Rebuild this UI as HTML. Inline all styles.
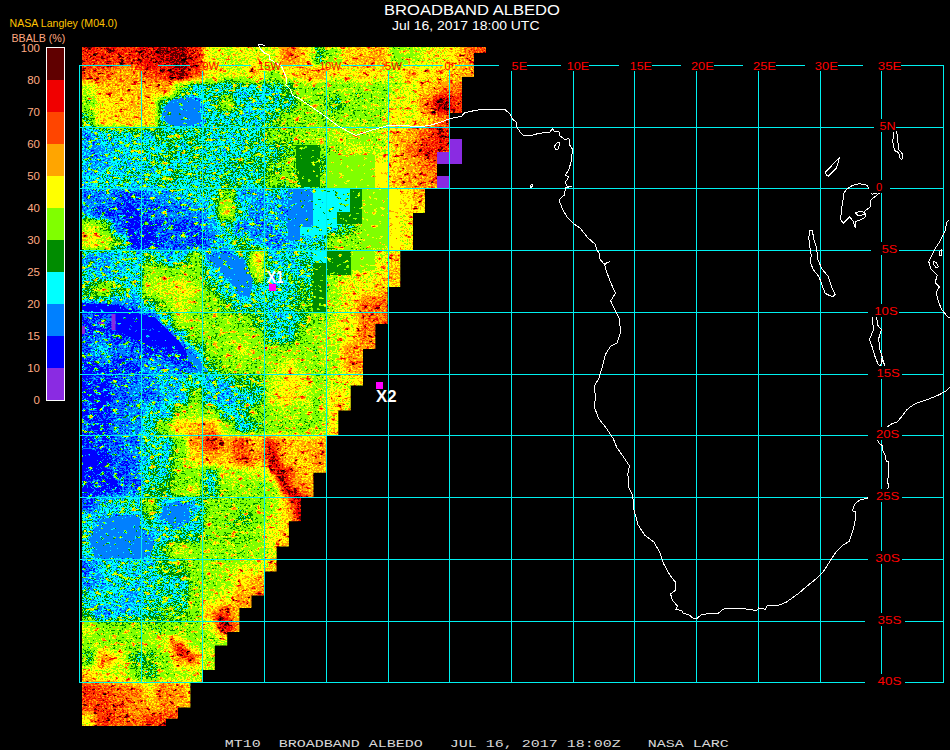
<!DOCTYPE html>
<html><head><meta charset="utf-8"><title>Broadband Albedo</title>
<style>
html,body{margin:0;padding:0;background:#000;width:950px;height:750px;overflow:hidden}
svg{display:block;font-family:"Liberation Sans",sans-serif}
</style></head><body>
<svg width="950" height="750" viewBox="0 0 950 750">
<defs>
<filter id="pal" x="0" y="0" width="950" height="750" filterUnits="userSpaceOnUse" color-interpolation-filters="sRGB">
<feGaussianBlur in="SourceGraphic" stdDeviation="3" result="lvl"/>
<feTurbulence type="fractalNoise" baseFrequency="0.16 0.26" numOctaves="3" seed="7" result="n"/>
<feColorMatrix in="n" type="matrix" values="1 0 0 0 0  1 0 0 0 0  1 0 0 0 0  0 0 0 0 1" result="ng0"/>
<feComponentTransfer in="ng0" result="ng"><feFuncR type="linear" slope="3" intercept="-1.77"/><feFuncG type="linear" slope="3" intercept="-1.77"/><feFuncB type="linear" slope="3" intercept="-1.77"/></feComponentTransfer>
<feTurbulence type="fractalNoise" baseFrequency="0.45 0.6" numOctaves="2" seed="11" result="nf"/>
<feColorMatrix in="nf" type="matrix" values="0 1 0 0 0  0 1 0 0 0  0 1 0 0 0  0 0 0 0 1" result="n2"/>
<feTurbulence type="fractalNoise" baseFrequency="0.09" numOctaves="2" seed="23" result="m"/>
<feColorMatrix in="m" type="matrix" values="0 1 0 0 0  0 1 0 0 0  0 1 0 0 0  0 0 0 0 1" result="mg"/>
<feComposite in="lvl" in2="mg" operator="arithmetic" k1="0" k2="1" k3="0.07" k4="-0.035" result="lvl2"/>
<feComposite in="lvl2" in2="n2" operator="arithmetic" k1="0.5" k2="0.75" k3="0.1" k4="-0.05" result="lvl3"/>
<feComposite in="lvl3" in2="ng" operator="arithmetic" k1="0.15" k2="1" k3="0.40" k4="0" result="sum"/>
<feComponentTransfer in="sum">
<feFuncR type="discrete" tableValues="0.000 0.000 0.000 0.000 0.000 0.000 0.502 0.502 1.000 1.000 1.000 1.000 1.000 1.000 0.941 0.941 0.376 0.376 0.376 0.376 0.000 0.000"/>
<feFuncG type="discrete" tableValues="0.000 0.000 0.000 0.502 1.000 0.549 1.000 1.000 1.000 1.000 0.647 0.647 0.271 0.271 0.000 0.000 0.000 0.000 0.000 0.000 0.000 0.000"/>
<feFuncB type="discrete" tableValues="1.000 1.000 1.000 1.000 1.000 0.000 0.000 0.000 0.000 0.000 0.000 0.000 0.000 0.000 0.000 0.000 0.000 0.000 0.000 0.000 0.000 0.000"/>
</feComponentTransfer>
</filter>
<filter id="pal2" x="0" y="0" width="950" height="750" filterUnits="userSpaceOnUse" color-interpolation-filters="sRGB">
<feTurbulence type="fractalNoise" baseFrequency="0.45 0.6" numOctaves="2" seed="5" result="nf"/>
<feColorMatrix in="nf" type="matrix" values="0 1 0 0 0  0 1 0 0 0  0 1 0 0 0  0 0 0 0 1" result="n2"/>
<feTurbulence type="fractalNoise" baseFrequency="0.18 0.28" numOctaves="3" seed="31" result="n"/>
<feColorMatrix in="n" type="matrix" values="1 0 0 0 0  1 0 0 0 0  1 0 0 0 0  0 0 0 0 1" result="ng0"/>
<feComponentTransfer in="ng0" result="ng"><feFuncR type="linear" slope="3" intercept="-1.92"/><feFuncG type="linear" slope="3" intercept="-1.92"/><feFuncB type="linear" slope="3" intercept="-1.92"/></feComponentTransfer>
<feComposite in="SourceGraphic" in2="n2" operator="arithmetic" k1="0" k2="1" k3="0.06" k4="-0.03" result="l3"/>
<feComposite in="l3" in2="ng" operator="arithmetic" k1="0" k2="1" k3="0.4" k4="0" result="sum"/>
<feComponentTransfer in="sum" result="col">
<feFuncR type="discrete" tableValues="0.000 0.000 0.000 0.000 0.000 0.000 0.502 0.502 1.000 1.000 1.000 1.000 1.000 1.000 0.941 0.941 0.376 0.376 0.376 0.376 0.000 0.000"/>
<feFuncG type="discrete" tableValues="0.000 0.000 0.000 0.502 1.000 0.549 1.000 1.000 1.000 1.000 0.647 0.647 0.271 0.271 0.000 0.000 0.000 0.000 0.000 0.000 0.000 0.000"/>
<feFuncB type="discrete" tableValues="1.000 1.000 1.000 1.000 1.000 0.000 0.000 0.000 0.000 0.000 0.000 0.000 0.000 0.000 0.000 0.000 0.000 0.000 0.000 0.000 0.000 0.000"/>
</feComponentTransfer>
<feComposite in="col" in2="SourceGraphic" operator="in"/>
</filter>
<clipPath id="dataclip"><polygon points="82,47 486,47 486,53 474,53 474,77 462,77 462,113 450,113 450,152 437,152 437,188 425,188 425,213 413,213 413,250 400.3,250 400.3,287 387.6,287 387.6,324 375.4,324 375.4,349 363,349 363,385.4 350.7,385.4 350.7,410.5 338.3,410.5 338.3,435 326,435 326,472.8 313.5,472.8 313.5,498 301,498 301,521.3 288.9,521.3 288.9,546.4 276.6,546.4 276.6,571.4 264,571.4 264,595.4 251.5,595.4 251.5,608 239.4,608 239.4,632 227.2,632 227.2,645.4 214.8,645.4 214.8,670 202.7,670 202.7,682.2 190.4,682.2 190.4,707.4 178,707.4 178,718.8 166,718.8 166,726 82,726"/></clipPath>
</defs>
<rect width="950" height="750" fill="#000"/>
<g clip-path="url(#dataclip)">
<g filter="url(#pal)">
<rect x="0" y="0" width="950" height="750" fill="#6a6a6a"/>
<rect x="49.6" y="3.9" width="15.9" height="15.9" fill="#a2a2a2"/>
<rect x="65.0" y="3.9" width="15.9" height="15.9" fill="#a2a2a2"/>
<rect x="80.4" y="3.9" width="15.9" height="15.9" fill="#a2a2a2"/>
<rect x="95.8" y="3.9" width="15.9" height="15.9" fill="#a2a2a2"/>
<rect x="111.2" y="3.9" width="15.9" height="15.9" fill="#a4a4a4"/>
<rect x="126.6" y="3.9" width="15.9" height="15.9" fill="#a7a7a7"/>
<rect x="142.0" y="3.9" width="15.9" height="15.9" fill="#adadad"/>
<rect x="157.4" y="3.9" width="15.9" height="15.9" fill="#b1b1b1"/>
<rect x="172.8" y="3.9" width="15.9" height="15.9" fill="#a8a8a8"/>
<rect x="188.2" y="3.9" width="15.9" height="15.9" fill="#939393"/>
<rect x="203.6" y="3.9" width="15.9" height="15.9" fill="#787878"/>
<rect x="219.0" y="3.9" width="15.9" height="15.9" fill="#676767"/>
<rect x="234.4" y="3.9" width="15.9" height="15.9" fill="#5f5f5f"/>
<rect x="249.8" y="3.9" width="15.9" height="15.9" fill="#646464"/>
<rect x="265.2" y="3.9" width="15.9" height="15.9" fill="#6b6b6b"/>
<rect x="280.6" y="3.9" width="15.9" height="15.9" fill="#6e6e6e"/>
<rect x="296.0" y="3.9" width="15.9" height="15.9" fill="#666666"/>
<rect x="311.4" y="3.9" width="15.9" height="15.9" fill="#5b5b5b"/>
<rect x="326.8" y="3.9" width="15.9" height="15.9" fill="#5b5b5b"/>
<rect x="342.2" y="3.9" width="15.9" height="15.9" fill="#676767"/>
<rect x="357.6" y="3.9" width="15.9" height="15.9" fill="#6e6e6e"/>
<rect x="373.0" y="3.9" width="15.9" height="15.9" fill="#6c6c6c"/>
<rect x="388.4" y="3.9" width="15.9" height="15.9" fill="#616161"/>
<rect x="403.8" y="3.9" width="15.9" height="15.9" fill="#5d5d5d"/>
<rect x="419.2" y="3.9" width="15.9" height="15.9" fill="#5f5f5f"/>
<rect x="434.6" y="3.9" width="15.9" height="15.9" fill="#6b6b6b"/>
<rect x="450.0" y="3.9" width="15.9" height="15.9" fill="#797979"/>
<rect x="465.4" y="3.9" width="15.9" height="15.9" fill="#898989"/>
<rect x="480.8" y="3.9" width="15.9" height="15.9" fill="#929292"/>
<rect x="496.2" y="3.9" width="15.9" height="15.9" fill="#979797"/>
<rect x="511.6" y="3.9" width="15.9" height="15.9" fill="#979797"/>
<rect x="49.6" y="19.3" width="15.9" height="15.9" fill="#a2a2a2"/>
<rect x="65.0" y="19.3" width="15.9" height="15.9" fill="#a2a2a2"/>
<rect x="80.4" y="19.3" width="15.9" height="15.9" fill="#a2a2a2"/>
<rect x="95.8" y="19.3" width="15.9" height="15.9" fill="#a2a2a2"/>
<rect x="111.2" y="19.3" width="15.9" height="15.9" fill="#a2a2a2"/>
<rect x="126.6" y="19.3" width="15.9" height="15.9" fill="#a6a6a6"/>
<rect x="142.0" y="19.3" width="15.9" height="15.9" fill="#acacac"/>
<rect x="157.4" y="19.3" width="15.9" height="15.9" fill="#b7b7b7"/>
<rect x="172.8" y="19.3" width="15.9" height="15.9" fill="#b1b1b1"/>
<rect x="188.2" y="19.3" width="15.9" height="15.9" fill="#949494"/>
<rect x="203.6" y="19.3" width="15.9" height="15.9" fill="#757575"/>
<rect x="219.0" y="19.3" width="15.9" height="15.9" fill="#5f5f5f"/>
<rect x="234.4" y="19.3" width="15.9" height="15.9" fill="#5f5f5f"/>
<rect x="249.8" y="19.3" width="15.9" height="15.9" fill="#5f5f5f"/>
<rect x="265.2" y="19.3" width="15.9" height="15.9" fill="#6e6e6e"/>
<rect x="280.6" y="19.3" width="15.9" height="15.9" fill="#757575"/>
<rect x="296.0" y="19.3" width="15.9" height="15.9" fill="#686868"/>
<rect x="311.4" y="19.3" width="15.9" height="15.9" fill="#555555"/>
<rect x="326.8" y="19.3" width="15.9" height="15.9" fill="#555555"/>
<rect x="342.2" y="19.3" width="15.9" height="15.9" fill="#686868"/>
<rect x="357.6" y="19.3" width="15.9" height="15.9" fill="#787878"/>
<rect x="373.0" y="19.3" width="15.9" height="15.9" fill="#6b6b6b"/>
<rect x="388.4" y="19.3" width="15.9" height="15.9" fill="#616161"/>
<rect x="403.8" y="19.3" width="15.9" height="15.9" fill="#575757"/>
<rect x="419.2" y="19.3" width="15.9" height="15.9" fill="#606060"/>
<rect x="434.6" y="19.3" width="15.9" height="15.9" fill="#686868"/>
<rect x="450.0" y="19.3" width="15.9" height="15.9" fill="#7a7a7a"/>
<rect x="465.4" y="19.3" width="15.9" height="15.9" fill="#8a8a8a"/>
<rect x="480.8" y="19.3" width="15.9" height="15.9" fill="#979797"/>
<rect x="496.2" y="19.3" width="15.9" height="15.9" fill="#979797"/>
<rect x="511.6" y="19.3" width="15.9" height="15.9" fill="#949494"/>
<rect x="49.6" y="34.7" width="15.9" height="15.9" fill="#a1a1a1"/>
<rect x="65.0" y="34.7" width="15.9" height="15.9" fill="#a2a2a2"/>
<rect x="80.4" y="34.7" width="15.9" height="15.9" fill="#a2a2a2"/>
<rect x="95.8" y="34.7" width="15.9" height="15.9" fill="#a2a2a2"/>
<rect x="111.2" y="34.7" width="15.9" height="15.9" fill="#a2a2a2"/>
<rect x="126.6" y="34.7" width="15.9" height="15.9" fill="#a2a2a2"/>
<rect x="142.0" y="34.7" width="15.9" height="15.9" fill="#aeaeae"/>
<rect x="157.4" y="34.7" width="15.9" height="15.9" fill="#b8b8b8"/>
<rect x="172.8" y="34.7" width="15.9" height="15.9" fill="#bfbfbf"/>
<rect x="188.2" y="34.7" width="15.9" height="15.9" fill="#a2a2a2"/>
<rect x="203.6" y="34.7" width="15.9" height="15.9" fill="#5f5f5f"/>
<rect x="219.0" y="34.7" width="15.9" height="15.9" fill="#5f5f5f"/>
<rect x="234.4" y="34.7" width="15.9" height="15.9" fill="#5f5f5f"/>
<rect x="249.8" y="34.7" width="15.9" height="15.9" fill="#5f5f5f"/>
<rect x="265.2" y="34.7" width="15.9" height="15.9" fill="#5f5f5f"/>
<rect x="280.6" y="34.7" width="15.9" height="15.9" fill="#8b8b8b"/>
<rect x="296.0" y="34.7" width="15.9" height="15.9" fill="#747474"/>
<rect x="311.4" y="34.7" width="15.9" height="15.9" fill="#404040"/>
<rect x="326.8" y="34.7" width="15.9" height="15.9" fill="#515151"/>
<rect x="342.2" y="34.7" width="15.9" height="15.9" fill="#747474"/>
<rect x="357.6" y="34.7" width="15.9" height="15.9" fill="#747474"/>
<rect x="373.0" y="34.7" width="15.9" height="15.9" fill="#808080"/>
<rect x="388.4" y="34.7" width="15.9" height="15.9" fill="#4e4e4e"/>
<rect x="403.8" y="34.7" width="15.9" height="15.9" fill="#585858"/>
<rect x="419.2" y="34.7" width="15.9" height="15.9" fill="#5f5f5f"/>
<rect x="434.6" y="34.7" width="15.9" height="15.9" fill="#686868"/>
<rect x="450.0" y="34.7" width="15.9" height="15.9" fill="#6f6f6f"/>
<rect x="465.4" y="34.7" width="15.9" height="15.9" fill="#979797"/>
<rect x="480.8" y="34.7" width="15.9" height="15.9" fill="#979797"/>
<rect x="496.2" y="34.7" width="15.9" height="15.9" fill="#919191"/>
<rect x="511.6" y="34.7" width="15.9" height="15.9" fill="#939393"/>
<rect x="49.6" y="50.1" width="15.9" height="15.9" fill="#989898"/>
<rect x="65.0" y="50.1" width="15.9" height="15.9" fill="#9e9e9e"/>
<rect x="80.4" y="50.1" width="15.9" height="15.9" fill="#a2a2a2"/>
<rect x="95.8" y="50.1" width="15.9" height="15.9" fill="#a2a2a2"/>
<rect x="111.2" y="50.1" width="15.9" height="15.9" fill="#a2a2a2"/>
<rect x="126.6" y="50.1" width="15.9" height="15.9" fill="#a2a2a2"/>
<rect x="142.0" y="50.1" width="15.9" height="15.9" fill="#aeaeae"/>
<rect x="157.4" y="50.1" width="15.9" height="15.9" fill="#b8b8b8"/>
<rect x="172.8" y="50.1" width="15.9" height="15.9" fill="#bfbfbf"/>
<rect x="188.2" y="50.1" width="15.9" height="15.9" fill="#a2a2a2"/>
<rect x="203.6" y="50.1" width="15.9" height="15.9" fill="#5f5f5f"/>
<rect x="219.0" y="50.1" width="15.9" height="15.9" fill="#5f5f5f"/>
<rect x="234.4" y="50.1" width="15.9" height="15.9" fill="#5f5f5f"/>
<rect x="249.8" y="50.1" width="15.9" height="15.9" fill="#5f5f5f"/>
<rect x="265.2" y="50.1" width="15.9" height="15.9" fill="#5f5f5f"/>
<rect x="280.6" y="50.1" width="15.9" height="15.9" fill="#8b8b8b"/>
<rect x="296.0" y="50.1" width="15.9" height="15.9" fill="#747474"/>
<rect x="311.4" y="50.1" width="15.9" height="15.9" fill="#404040"/>
<rect x="326.8" y="50.1" width="15.9" height="15.9" fill="#515151"/>
<rect x="342.2" y="50.1" width="15.9" height="15.9" fill="#747474"/>
<rect x="357.6" y="50.1" width="15.9" height="15.9" fill="#747474"/>
<rect x="373.0" y="50.1" width="15.9" height="15.9" fill="#808080"/>
<rect x="388.4" y="50.1" width="15.9" height="15.9" fill="#4e4e4e"/>
<rect x="403.8" y="50.1" width="15.9" height="15.9" fill="#585858"/>
<rect x="419.2" y="50.1" width="15.9" height="15.9" fill="#5f5f5f"/>
<rect x="434.6" y="50.1" width="15.9" height="15.9" fill="#686868"/>
<rect x="450.0" y="50.1" width="15.9" height="15.9" fill="#6f6f6f"/>
<rect x="465.4" y="50.1" width="15.9" height="15.9" fill="#8b8b8b"/>
<rect x="480.8" y="50.1" width="15.9" height="15.9" fill="#8b8b8b"/>
<rect x="496.2" y="50.1" width="15.9" height="15.9" fill="#919191"/>
<rect x="511.6" y="50.1" width="15.9" height="15.9" fill="#8f8f8f"/>
<rect x="49.6" y="65.5" width="15.9" height="15.9" fill="#858585"/>
<rect x="65.0" y="65.5" width="15.9" height="15.9" fill="#878787"/>
<rect x="80.4" y="65.5" width="15.9" height="15.9" fill="#979797"/>
<rect x="95.8" y="65.5" width="15.9" height="15.9" fill="#8b8b8b"/>
<rect x="111.2" y="65.5" width="15.9" height="15.9" fill="#808080"/>
<rect x="126.6" y="65.5" width="15.9" height="15.9" fill="#808080"/>
<rect x="142.0" y="65.5" width="15.9" height="15.9" fill="#979797"/>
<rect x="157.4" y="65.5" width="15.9" height="15.9" fill="#a2a2a2"/>
<rect x="172.8" y="65.5" width="15.9" height="15.9" fill="#bfbfbf"/>
<rect x="188.2" y="65.5" width="15.9" height="15.9" fill="#979797"/>
<rect x="203.6" y="65.5" width="15.9" height="15.9" fill="#686868"/>
<rect x="219.0" y="65.5" width="15.9" height="15.9" fill="#5d5d5d"/>
<rect x="234.4" y="65.5" width="15.9" height="15.9" fill="#5d5d5d"/>
<rect x="249.8" y="65.5" width="15.9" height="15.9" fill="#747474"/>
<rect x="265.2" y="65.5" width="15.9" height="15.9" fill="#4e4e4e"/>
<rect x="280.6" y="65.5" width="15.9" height="15.9" fill="#686868"/>
<rect x="296.0" y="65.5" width="15.9" height="15.9" fill="#747474"/>
<rect x="311.4" y="65.5" width="15.9" height="15.9" fill="#808080"/>
<rect x="326.8" y="65.5" width="15.9" height="15.9" fill="#686868"/>
<rect x="342.2" y="65.5" width="15.9" height="15.9" fill="#686868"/>
<rect x="357.6" y="65.5" width="15.9" height="15.9" fill="#747474"/>
<rect x="373.0" y="65.5" width="15.9" height="15.9" fill="#686868"/>
<rect x="388.4" y="65.5" width="15.9" height="15.9" fill="#5d5d5d"/>
<rect x="403.8" y="65.5" width="15.9" height="15.9" fill="#747474"/>
<rect x="419.2" y="65.5" width="15.9" height="15.9" fill="#646464"/>
<rect x="434.6" y="65.5" width="15.9" height="15.9" fill="#6f6f6f"/>
<rect x="450.0" y="65.5" width="15.9" height="15.9" fill="#747474"/>
<rect x="465.4" y="65.5" width="15.9" height="15.9" fill="#808080"/>
<rect x="480.8" y="65.5" width="15.9" height="15.9" fill="#888888"/>
<rect x="496.2" y="65.5" width="15.9" height="15.9" fill="#8b8b8b"/>
<rect x="511.6" y="65.5" width="15.9" height="15.9" fill="#8e8e8e"/>
<rect x="49.6" y="80.9" width="15.9" height="15.9" fill="#6a6a6a"/>
<rect x="65.0" y="80.9" width="15.9" height="15.9" fill="#6b6b6b"/>
<rect x="80.4" y="80.9" width="15.9" height="15.9" fill="#5d5d5d"/>
<rect x="95.8" y="80.9" width="15.9" height="15.9" fill="#767676"/>
<rect x="111.2" y="80.9" width="15.9" height="15.9" fill="#767676"/>
<rect x="126.6" y="80.9" width="15.9" height="15.9" fill="#767676"/>
<rect x="142.0" y="80.9" width="15.9" height="15.9" fill="#767676"/>
<rect x="157.4" y="80.9" width="15.9" height="15.9" fill="#808080"/>
<rect x="172.8" y="80.9" width="15.9" height="15.9" fill="#4a4a4a"/>
<rect x="188.2" y="80.9" width="15.9" height="15.9" fill="#323232"/>
<rect x="203.6" y="80.9" width="15.9" height="15.9" fill="#383838"/>
<rect x="219.0" y="80.9" width="15.9" height="15.9" fill="#363636"/>
<rect x="234.4" y="80.9" width="15.9" height="15.9" fill="#363636"/>
<rect x="249.8" y="80.9" width="15.9" height="15.9" fill="#363636"/>
<rect x="265.2" y="80.9" width="15.9" height="15.9" fill="#343434"/>
<rect x="280.6" y="80.9" width="15.9" height="15.9" fill="#404040"/>
<rect x="296.0" y="80.9" width="15.9" height="15.9" fill="#515151"/>
<rect x="311.4" y="80.9" width="15.9" height="15.9" fill="#4f4f4f"/>
<rect x="326.8" y="80.9" width="15.9" height="15.9" fill="#4e4e4e"/>
<rect x="342.2" y="80.9" width="15.9" height="15.9" fill="#515151"/>
<rect x="357.6" y="80.9" width="15.9" height="15.9" fill="#515151"/>
<rect x="373.0" y="80.9" width="15.9" height="15.9" fill="#515151"/>
<rect x="388.4" y="80.9" width="15.9" height="15.9" fill="#585858"/>
<rect x="403.8" y="80.9" width="15.9" height="15.9" fill="#616161"/>
<rect x="419.2" y="80.9" width="15.9" height="15.9" fill="#747474"/>
<rect x="434.6" y="80.9" width="15.9" height="15.9" fill="#808080"/>
<rect x="450.0" y="80.9" width="15.9" height="15.9" fill="#8b8b8b"/>
<rect x="465.4" y="80.9" width="15.9" height="15.9" fill="#8b8b8b"/>
<rect x="480.8" y="80.9" width="15.9" height="15.9" fill="#8f8f8f"/>
<rect x="496.2" y="80.9" width="15.9" height="15.9" fill="#8e8e8e"/>
<rect x="511.6" y="80.9" width="15.9" height="15.9" fill="#8b8b8b"/>
<rect x="49.6" y="96.3" width="15.9" height="15.9" fill="#4f4f4f"/>
<rect x="65.0" y="96.3" width="15.9" height="15.9" fill="#4d4d4d"/>
<rect x="80.4" y="96.3" width="15.9" height="15.9" fill="#4e4e4e"/>
<rect x="95.8" y="96.3" width="15.9" height="15.9" fill="#6f6f6f"/>
<rect x="111.2" y="96.3" width="15.9" height="15.9" fill="#6f6f6f"/>
<rect x="126.6" y="96.3" width="15.9" height="15.9" fill="#747474"/>
<rect x="142.0" y="96.3" width="15.9" height="15.9" fill="#6f6f6f"/>
<rect x="157.4" y="96.3" width="15.9" height="15.9" fill="#383838"/>
<rect x="172.8" y="96.3" width="15.9" height="15.9" fill="#2a2a2a"/>
<rect x="188.2" y="96.3" width="15.9" height="15.9" fill="#2a2a2a"/>
<rect x="203.6" y="96.3" width="15.9" height="15.9" fill="#363636"/>
<rect x="219.0" y="96.3" width="15.9" height="15.9" fill="#4e4e4e"/>
<rect x="234.4" y="96.3" width="15.9" height="15.9" fill="#343434"/>
<rect x="249.8" y="96.3" width="15.9" height="15.9" fill="#343434"/>
<rect x="265.2" y="96.3" width="15.9" height="15.9" fill="#353535"/>
<rect x="280.6" y="96.3" width="15.9" height="15.9" fill="#383838"/>
<rect x="296.0" y="96.3" width="15.9" height="15.9" fill="#4e4e4e"/>
<rect x="311.4" y="96.3" width="15.9" height="15.9" fill="#4e4e4e"/>
<rect x="326.8" y="96.3" width="15.9" height="15.9" fill="#414141"/>
<rect x="342.2" y="96.3" width="15.9" height="15.9" fill="#4e4e4e"/>
<rect x="357.6" y="96.3" width="15.9" height="15.9" fill="#505050"/>
<rect x="373.0" y="96.3" width="15.9" height="15.9" fill="#515151"/>
<rect x="388.4" y="96.3" width="15.9" height="15.9" fill="#646464"/>
<rect x="403.8" y="96.3" width="15.9" height="15.9" fill="#646464"/>
<rect x="419.2" y="96.3" width="15.9" height="15.9" fill="#8b8b8b"/>
<rect x="434.6" y="96.3" width="15.9" height="15.9" fill="#bfbfbf"/>
<rect x="450.0" y="96.3" width="15.9" height="15.9" fill="#a2a2a2"/>
<rect x="465.4" y="96.3" width="15.9" height="15.9" fill="#a2a2a2"/>
<rect x="480.8" y="96.3" width="15.9" height="15.9" fill="#979797"/>
<rect x="496.2" y="96.3" width="15.9" height="15.9" fill="#989898"/>
<rect x="49.6" y="111.7" width="15.9" height="15.9" fill="#3d3d3d"/>
<rect x="65.0" y="111.7" width="15.9" height="15.9" fill="#3c3c3c"/>
<rect x="80.4" y="111.7" width="15.9" height="15.9" fill="#404040"/>
<rect x="95.8" y="111.7" width="15.9" height="15.9" fill="#6f6f6f"/>
<rect x="111.2" y="111.7" width="15.9" height="15.9" fill="#6f6f6f"/>
<rect x="126.6" y="111.7" width="15.9" height="15.9" fill="#747474"/>
<rect x="142.0" y="111.7" width="15.9" height="15.9" fill="#6f6f6f"/>
<rect x="157.4" y="111.7" width="15.9" height="15.9" fill="#323232"/>
<rect x="172.8" y="111.7" width="15.9" height="15.9" fill="#2a2a2a"/>
<rect x="188.2" y="111.7" width="15.9" height="15.9" fill="#2a2a2a"/>
<rect x="203.6" y="111.7" width="15.9" height="15.9" fill="#363636"/>
<rect x="219.0" y="111.7" width="15.9" height="15.9" fill="#383838"/>
<rect x="234.4" y="111.7" width="15.9" height="15.9" fill="#343434"/>
<rect x="249.8" y="111.7" width="15.9" height="15.9" fill="#343434"/>
<rect x="265.2" y="111.7" width="15.9" height="15.9" fill="#404040"/>
<rect x="280.6" y="111.7" width="15.9" height="15.9" fill="#4c4c4c"/>
<rect x="296.0" y="111.7" width="15.9" height="15.9" fill="#4e4e4e"/>
<rect x="311.4" y="111.7" width="15.9" height="15.9" fill="#4d4d4d"/>
<rect x="326.8" y="111.7" width="15.9" height="15.9" fill="#4e4e4e"/>
<rect x="342.2" y="111.7" width="15.9" height="15.9" fill="#4e4e4e"/>
<rect x="357.6" y="111.7" width="15.9" height="15.9" fill="#515151"/>
<rect x="373.0" y="111.7" width="15.9" height="15.9" fill="#515151"/>
<rect x="388.4" y="111.7" width="15.9" height="15.9" fill="#646464"/>
<rect x="403.8" y="111.7" width="15.9" height="15.9" fill="#646464"/>
<rect x="419.2" y="111.7" width="15.9" height="15.9" fill="#747474"/>
<rect x="434.6" y="111.7" width="15.9" height="15.9" fill="#8b8b8b"/>
<rect x="450.0" y="111.7" width="15.9" height="15.9" fill="#979797"/>
<rect x="465.4" y="111.7" width="15.9" height="15.9" fill="#979797"/>
<rect x="480.8" y="111.7" width="15.9" height="15.9" fill="#a2a2a2"/>
<rect x="496.2" y="111.7" width="15.9" height="15.9" fill="#9e9e9e"/>
<rect x="49.6" y="127.2" width="15.9" height="15.9" fill="#343434"/>
<rect x="65.0" y="127.2" width="15.9" height="15.9" fill="#323232"/>
<rect x="80.4" y="127.2" width="15.9" height="15.9" fill="#2c2c2c"/>
<rect x="95.8" y="127.2" width="15.9" height="15.9" fill="#313131"/>
<rect x="111.2" y="127.2" width="15.9" height="15.9" fill="#343434"/>
<rect x="126.6" y="127.2" width="15.9" height="15.9" fill="#363636"/>
<rect x="142.0" y="127.2" width="15.9" height="15.9" fill="#363636"/>
<rect x="157.4" y="127.2" width="15.9" height="15.9" fill="#3a3a3a"/>
<rect x="172.8" y="127.2" width="15.9" height="15.9" fill="#3a3a3a"/>
<rect x="188.2" y="127.2" width="15.9" height="15.9" fill="#3a3a3a"/>
<rect x="203.6" y="127.2" width="15.9" height="15.9" fill="#353535"/>
<rect x="219.0" y="127.2" width="15.9" height="15.9" fill="#353535"/>
<rect x="234.4" y="127.2" width="15.9" height="15.9" fill="#363636"/>
<rect x="249.8" y="127.2" width="15.9" height="15.9" fill="#373737"/>
<rect x="265.2" y="127.2" width="15.9" height="15.9" fill="#4c4c4c"/>
<rect x="280.6" y="127.2" width="15.9" height="15.9" fill="#4c4c4c"/>
<rect x="296.0" y="127.2" width="15.9" height="15.9" fill="#505050"/>
<rect x="311.4" y="127.2" width="15.9" height="15.9" fill="#515151"/>
<rect x="326.8" y="127.2" width="15.9" height="15.9" fill="#585858"/>
<rect x="342.2" y="127.2" width="15.9" height="15.9" fill="#585858"/>
<rect x="357.6" y="127.2" width="15.9" height="15.9" fill="#535353"/>
<rect x="373.0" y="127.2" width="15.9" height="15.9" fill="#5a5a5a"/>
<rect x="388.4" y="127.2" width="15.9" height="15.9" fill="#747474"/>
<rect x="403.8" y="127.2" width="15.9" height="15.9" fill="#7b7b7b"/>
<rect x="419.2" y="127.2" width="15.9" height="15.9" fill="#979797"/>
<rect x="434.6" y="127.2" width="15.9" height="15.9" fill="#aeaeae"/>
<rect x="450.0" y="127.2" width="15.9" height="15.9" fill="#aeaeae"/>
<rect x="465.4" y="127.2" width="15.9" height="15.9" fill="#aeaeae"/>
<rect x="480.8" y="127.2" width="15.9" height="15.9" fill="#a2a2a2"/>
<rect x="496.2" y="127.2" width="15.9" height="15.9" fill="#a1a1a1"/>
<rect x="49.6" y="142.6" width="15.9" height="15.9" fill="#2f2f2f"/>
<rect x="65.0" y="142.6" width="15.9" height="15.9" fill="#2c2c2c"/>
<rect x="80.4" y="142.6" width="15.9" height="15.9" fill="#2b2b2b"/>
<rect x="95.8" y="142.6" width="15.9" height="15.9" fill="#2d2d2d"/>
<rect x="111.2" y="142.6" width="15.9" height="15.9" fill="#313131"/>
<rect x="126.6" y="142.6" width="15.9" height="15.9" fill="#343434"/>
<rect x="142.0" y="142.6" width="15.9" height="15.9" fill="#373737"/>
<rect x="157.4" y="142.6" width="15.9" height="15.9" fill="#3a3a3a"/>
<rect x="172.8" y="142.6" width="15.9" height="15.9" fill="#3a3a3a"/>
<rect x="188.2" y="142.6" width="15.9" height="15.9" fill="#3a3a3a"/>
<rect x="203.6" y="142.6" width="15.9" height="15.9" fill="#363636"/>
<rect x="219.0" y="142.6" width="15.9" height="15.9" fill="#363636"/>
<rect x="234.4" y="142.6" width="15.9" height="15.9" fill="#373737"/>
<rect x="249.8" y="142.6" width="15.9" height="15.9" fill="#3a3a3a"/>
<rect x="265.2" y="142.6" width="15.9" height="15.9" fill="#383838"/>
<rect x="280.6" y="142.6" width="15.9" height="15.9" fill="#404040"/>
<rect x="296.0" y="142.6" width="15.9" height="15.9" fill="#4e4e4e"/>
<rect x="311.4" y="142.6" width="15.9" height="15.9" fill="#4e4e4e"/>
<rect x="326.8" y="142.6" width="15.9" height="15.9" fill="#515151"/>
<rect x="342.2" y="142.6" width="15.9" height="15.9" fill="#5d5d5d"/>
<rect x="357.6" y="142.6" width="15.9" height="15.9" fill="#5a5a5a"/>
<rect x="373.0" y="142.6" width="15.9" height="15.9" fill="#5a5a5a"/>
<rect x="388.4" y="142.6" width="15.9" height="15.9" fill="#6f6f6f"/>
<rect x="403.8" y="142.6" width="15.9" height="15.9" fill="#8b8b8b"/>
<rect x="419.2" y="142.6" width="15.9" height="15.9" fill="#9e9e9e"/>
<rect x="434.6" y="142.6" width="15.9" height="15.9" fill="#a2a2a2"/>
<rect x="450.0" y="142.6" width="15.9" height="15.9" fill="#a2a2a2"/>
<rect x="465.4" y="142.6" width="15.9" height="15.9" fill="#a2a2a2"/>
<rect x="480.8" y="142.6" width="15.9" height="15.9" fill="#9e9e9e"/>
<rect x="496.2" y="142.6" width="15.9" height="15.9" fill="#9b9b9b"/>
<rect x="49.6" y="158.0" width="15.9" height="15.9" fill="#2d2d2d"/>
<rect x="65.0" y="158.0" width="15.9" height="15.9" fill="#2e2e2e"/>
<rect x="80.4" y="158.0" width="15.9" height="15.9" fill="#2e2e2e"/>
<rect x="95.8" y="158.0" width="15.9" height="15.9" fill="#2d2d2d"/>
<rect x="111.2" y="158.0" width="15.9" height="15.9" fill="#303030"/>
<rect x="126.6" y="158.0" width="15.9" height="15.9" fill="#323232"/>
<rect x="142.0" y="158.0" width="15.9" height="15.9" fill="#353535"/>
<rect x="157.4" y="158.0" width="15.9" height="15.9" fill="#363636"/>
<rect x="172.8" y="158.0" width="15.9" height="15.9" fill="#353535"/>
<rect x="188.2" y="158.0" width="15.9" height="15.9" fill="#353535"/>
<rect x="203.6" y="158.0" width="15.9" height="15.9" fill="#363636"/>
<rect x="219.0" y="158.0" width="15.9" height="15.9" fill="#373737"/>
<rect x="234.4" y="158.0" width="15.9" height="15.9" fill="#3a3a3a"/>
<rect x="249.8" y="158.0" width="15.9" height="15.9" fill="#3a3a3a"/>
<rect x="265.2" y="158.0" width="15.9" height="15.9" fill="#404040"/>
<rect x="280.6" y="158.0" width="15.9" height="15.9" fill="#4c4c4c"/>
<rect x="296.0" y="158.0" width="15.9" height="15.9" fill="#414141"/>
<rect x="311.4" y="158.0" width="15.9" height="15.9" fill="#414141"/>
<rect x="326.8" y="158.0" width="15.9" height="15.9" fill="#515151"/>
<rect x="342.2" y="158.0" width="15.9" height="15.9" fill="#515151"/>
<rect x="357.6" y="158.0" width="15.9" height="15.9" fill="#585858"/>
<rect x="373.0" y="158.0" width="15.9" height="15.9" fill="#686868"/>
<rect x="388.4" y="158.0" width="15.9" height="15.9" fill="#6f6f6f"/>
<rect x="403.8" y="158.0" width="15.9" height="15.9" fill="#7b7b7b"/>
<rect x="419.2" y="158.0" width="15.9" height="15.9" fill="#8b8b8b"/>
<rect x="434.6" y="158.0" width="15.9" height="15.9" fill="#8b8b8b"/>
<rect x="450.0" y="158.0" width="15.9" height="15.9" fill="#8b8b8b"/>
<rect x="465.4" y="158.0" width="15.9" height="15.9" fill="#8b8b8b"/>
<rect x="480.8" y="158.0" width="15.9" height="15.9" fill="#919191"/>
<rect x="496.2" y="158.0" width="15.9" height="15.9" fill="#939393"/>
<rect x="49.6" y="173.4" width="15.9" height="15.9" fill="#2d2d2d"/>
<rect x="65.0" y="173.4" width="15.9" height="15.9" fill="#2d2d2d"/>
<rect x="80.4" y="173.4" width="15.9" height="15.9" fill="#323232"/>
<rect x="95.8" y="173.4" width="15.9" height="15.9" fill="#363636"/>
<rect x="111.2" y="173.4" width="15.9" height="15.9" fill="#363636"/>
<rect x="126.6" y="173.4" width="15.9" height="15.9" fill="#363636"/>
<rect x="142.0" y="173.4" width="15.9" height="15.9" fill="#363636"/>
<rect x="157.4" y="173.4" width="15.9" height="15.9" fill="#383838"/>
<rect x="172.8" y="173.4" width="15.9" height="15.9" fill="#3a3a3a"/>
<rect x="188.2" y="173.4" width="15.9" height="15.9" fill="#373737"/>
<rect x="203.6" y="173.4" width="15.9" height="15.9" fill="#373737"/>
<rect x="219.0" y="173.4" width="15.9" height="15.9" fill="#373737"/>
<rect x="234.4" y="173.4" width="15.9" height="15.9" fill="#373737"/>
<rect x="249.8" y="173.4" width="15.9" height="15.9" fill="#383838"/>
<rect x="265.2" y="173.4" width="15.9" height="15.9" fill="#4c4c4c"/>
<rect x="280.6" y="173.4" width="15.9" height="15.9" fill="#4d4d4d"/>
<rect x="296.0" y="173.4" width="15.9" height="15.9" fill="#414141"/>
<rect x="311.4" y="173.4" width="15.9" height="15.9" fill="#4d4d4d"/>
<rect x="326.8" y="173.4" width="15.9" height="15.9" fill="#515151"/>
<rect x="342.2" y="173.4" width="15.9" height="15.9" fill="#515151"/>
<rect x="357.6" y="173.4" width="15.9" height="15.9" fill="#585858"/>
<rect x="373.0" y="173.4" width="15.9" height="15.9" fill="#686868"/>
<rect x="388.4" y="173.4" width="15.9" height="15.9" fill="#747474"/>
<rect x="403.8" y="173.4" width="15.9" height="15.9" fill="#7b7b7b"/>
<rect x="419.2" y="173.4" width="15.9" height="15.9" fill="#868686"/>
<rect x="434.6" y="173.4" width="15.9" height="15.9" fill="#868686"/>
<rect x="450.0" y="173.4" width="15.9" height="15.9" fill="#868686"/>
<rect x="465.4" y="173.4" width="15.9" height="15.9" fill="#868686"/>
<rect x="480.8" y="173.4" width="15.9" height="15.9" fill="#898989"/>
<rect x="496.2" y="173.4" width="15.9" height="15.9" fill="#8b8b8b"/>
<rect x="49.6" y="188.8" width="15.9" height="15.9" fill="#2f2f2f"/>
<rect x="65.0" y="188.8" width="15.9" height="15.9" fill="#2b2b2b"/>
<rect x="80.4" y="188.8" width="15.9" height="15.9" fill="#262626"/>
<rect x="95.8" y="188.8" width="15.9" height="15.9" fill="#2a2a2a"/>
<rect x="111.2" y="188.8" width="15.9" height="15.9" fill="#242424"/>
<rect x="126.6" y="188.8" width="15.9" height="15.9" fill="#202020"/>
<rect x="142.0" y="188.8" width="15.9" height="15.9" fill="#272727"/>
<rect x="157.4" y="188.8" width="15.9" height="15.9" fill="#2b2b2b"/>
<rect x="172.8" y="188.8" width="15.9" height="15.9" fill="#303030"/>
<rect x="188.2" y="188.8" width="15.9" height="15.9" fill="#323232"/>
<rect x="203.6" y="188.8" width="15.9" height="15.9" fill="#363636"/>
<rect x="219.0" y="188.8" width="15.9" height="15.9" fill="#4e4e4e"/>
<rect x="234.4" y="188.8" width="15.9" height="15.9" fill="#2e2e2e"/>
<rect x="249.8" y="188.8" width="15.9" height="15.9" fill="#2c2c2c"/>
<rect x="265.2" y="188.8" width="15.9" height="15.9" fill="#2e2e2e"/>
<rect x="280.6" y="188.8" width="15.9" height="15.9" fill="#2b2b2b"/>
<rect x="296.0" y="188.8" width="15.9" height="15.9" fill="#2b2b2b"/>
<rect x="311.4" y="188.8" width="15.9" height="15.9" fill="#343434"/>
<rect x="326.8" y="188.8" width="15.9" height="15.9" fill="#343434"/>
<rect x="342.2" y="188.8" width="15.9" height="15.9" fill="#373737"/>
<rect x="357.6" y="188.8" width="15.9" height="15.9" fill="#4e4e4e"/>
<rect x="373.0" y="188.8" width="15.9" height="15.9" fill="#505050"/>
<rect x="388.4" y="188.8" width="15.9" height="15.9" fill="#616161"/>
<rect x="403.8" y="188.8" width="15.9" height="15.9" fill="#747474"/>
<rect x="419.2" y="188.8" width="15.9" height="15.9" fill="#747474"/>
<rect x="434.6" y="188.8" width="15.9" height="15.9" fill="#747474"/>
<rect x="450.0" y="188.8" width="15.9" height="15.9" fill="#7e7e7e"/>
<rect x="465.4" y="188.8" width="15.9" height="15.9" fill="#868686"/>
<rect x="480.8" y="188.8" width="15.9" height="15.9" fill="#868686"/>
<rect x="496.2" y="188.8" width="15.9" height="15.9" fill="#888888"/>
<rect x="49.6" y="204.2" width="15.9" height="15.9" fill="#383838"/>
<rect x="65.0" y="204.2" width="15.9" height="15.9" fill="#363636"/>
<rect x="80.4" y="204.2" width="15.9" height="15.9" fill="#2a2a2a"/>
<rect x="95.8" y="204.2" width="15.9" height="15.9" fill="#1e1e1e"/>
<rect x="111.2" y="204.2" width="15.9" height="15.9" fill="#222222"/>
<rect x="126.6" y="204.2" width="15.9" height="15.9" fill="#1f1f1f"/>
<rect x="142.0" y="204.2" width="15.9" height="15.9" fill="#242424"/>
<rect x="157.4" y="204.2" width="15.9" height="15.9" fill="#242424"/>
<rect x="172.8" y="204.2" width="15.9" height="15.9" fill="#262626"/>
<rect x="188.2" y="204.2" width="15.9" height="15.9" fill="#2a2a2a"/>
<rect x="203.6" y="204.2" width="15.9" height="15.9" fill="#343434"/>
<rect x="219.0" y="204.2" width="15.9" height="15.9" fill="#5d5d5d"/>
<rect x="234.4" y="204.2" width="15.9" height="15.9" fill="#363636"/>
<rect x="249.8" y="204.2" width="15.9" height="15.9" fill="#292929"/>
<rect x="265.2" y="204.2" width="15.9" height="15.9" fill="#2e2e2e"/>
<rect x="280.6" y="204.2" width="15.9" height="15.9" fill="#2c2c2c"/>
<rect x="296.0" y="204.2" width="15.9" height="15.9" fill="#2b2b2b"/>
<rect x="311.4" y="204.2" width="15.9" height="15.9" fill="#343434"/>
<rect x="326.8" y="204.2" width="15.9" height="15.9" fill="#353535"/>
<rect x="342.2" y="204.2" width="15.9" height="15.9" fill="#404040"/>
<rect x="357.6" y="204.2" width="15.9" height="15.9" fill="#4d4d4d"/>
<rect x="373.0" y="204.2" width="15.9" height="15.9" fill="#515151"/>
<rect x="388.4" y="204.2" width="15.9" height="15.9" fill="#646464"/>
<rect x="403.8" y="204.2" width="15.9" height="15.9" fill="#6f6f6f"/>
<rect x="419.2" y="204.2" width="15.9" height="15.9" fill="#6f6f6f"/>
<rect x="434.6" y="204.2" width="15.9" height="15.9" fill="#6f6f6f"/>
<rect x="450.0" y="204.2" width="15.9" height="15.9" fill="#6e6e6e"/>
<rect x="465.4" y="204.2" width="15.9" height="15.9" fill="#7a7a7a"/>
<rect x="480.8" y="204.2" width="15.9" height="15.9" fill="#868686"/>
<rect x="496.2" y="204.2" width="15.9" height="15.9" fill="#868686"/>
<rect x="49.6" y="219.6" width="15.9" height="15.9" fill="#414141"/>
<rect x="65.0" y="219.6" width="15.9" height="15.9" fill="#494949"/>
<rect x="80.4" y="219.6" width="15.9" height="15.9" fill="#5d5d5d"/>
<rect x="95.8" y="219.6" width="15.9" height="15.9" fill="#4e4e4e"/>
<rect x="111.2" y="219.6" width="15.9" height="15.9" fill="#242424"/>
<rect x="126.6" y="219.6" width="15.9" height="15.9" fill="#1d1d1d"/>
<rect x="142.0" y="219.6" width="15.9" height="15.9" fill="#202020"/>
<rect x="157.4" y="219.6" width="15.9" height="15.9" fill="#242424"/>
<rect x="172.8" y="219.6" width="15.9" height="15.9" fill="#242424"/>
<rect x="188.2" y="219.6" width="15.9" height="15.9" fill="#222222"/>
<rect x="203.6" y="219.6" width="15.9" height="15.9" fill="#292929"/>
<rect x="219.0" y="219.6" width="15.9" height="15.9" fill="#363636"/>
<rect x="234.4" y="219.6" width="15.9" height="15.9" fill="#292929"/>
<rect x="249.8" y="219.6" width="15.9" height="15.9" fill="#262626"/>
<rect x="265.2" y="219.6" width="15.9" height="15.9" fill="#2e2e2e"/>
<rect x="280.6" y="219.6" width="15.9" height="15.9" fill="#303030"/>
<rect x="296.0" y="219.6" width="15.9" height="15.9" fill="#303030"/>
<rect x="311.4" y="219.6" width="15.9" height="15.9" fill="#343434"/>
<rect x="326.8" y="219.6" width="15.9" height="15.9" fill="#363636"/>
<rect x="342.2" y="219.6" width="15.9" height="15.9" fill="#414141"/>
<rect x="357.6" y="219.6" width="15.9" height="15.9" fill="#515151"/>
<rect x="373.0" y="219.6" width="15.9" height="15.9" fill="#515151"/>
<rect x="388.4" y="219.6" width="15.9" height="15.9" fill="#646464"/>
<rect x="403.8" y="219.6" width="15.9" height="15.9" fill="#686868"/>
<rect x="419.2" y="219.6" width="15.9" height="15.9" fill="#686868"/>
<rect x="434.6" y="219.6" width="15.9" height="15.9" fill="#686868"/>
<rect x="450.0" y="219.6" width="15.9" height="15.9" fill="#6b6b6b"/>
<rect x="465.4" y="219.6" width="15.9" height="15.9" fill="#6b6b6b"/>
<rect x="49.6" y="235.0" width="15.9" height="15.9" fill="#434343"/>
<rect x="65.0" y="235.0" width="15.9" height="15.9" fill="#494949"/>
<rect x="80.4" y="235.0" width="15.9" height="15.9" fill="#686868"/>
<rect x="95.8" y="235.0" width="15.9" height="15.9" fill="#5d5d5d"/>
<rect x="111.2" y="235.0" width="15.9" height="15.9" fill="#404040"/>
<rect x="126.6" y="235.0" width="15.9" height="15.9" fill="#1d1d1d"/>
<rect x="142.0" y="235.0" width="15.9" height="15.9" fill="#1e1e1e"/>
<rect x="157.4" y="235.0" width="15.9" height="15.9" fill="#242424"/>
<rect x="172.8" y="235.0" width="15.9" height="15.9" fill="#242424"/>
<rect x="188.2" y="235.0" width="15.9" height="15.9" fill="#1e1e1e"/>
<rect x="203.6" y="235.0" width="15.9" height="15.9" fill="#292929"/>
<rect x="219.0" y="235.0" width="15.9" height="15.9" fill="#343434"/>
<rect x="234.4" y="235.0" width="15.9" height="15.9" fill="#404040"/>
<rect x="249.8" y="235.0" width="15.9" height="15.9" fill="#2e2e2e"/>
<rect x="265.2" y="235.0" width="15.9" height="15.9" fill="#262626"/>
<rect x="280.6" y="235.0" width="15.9" height="15.9" fill="#2d2d2d"/>
<rect x="296.0" y="235.0" width="15.9" height="15.9" fill="#343434"/>
<rect x="311.4" y="235.0" width="15.9" height="15.9" fill="#373737"/>
<rect x="326.8" y="235.0" width="15.9" height="15.9" fill="#505050"/>
<rect x="342.2" y="235.0" width="15.9" height="15.9" fill="#515151"/>
<rect x="357.6" y="235.0" width="15.9" height="15.9" fill="#515151"/>
<rect x="373.0" y="235.0" width="15.9" height="15.9" fill="#515151"/>
<rect x="388.4" y="235.0" width="15.9" height="15.9" fill="#646464"/>
<rect x="403.8" y="235.0" width="15.9" height="15.9" fill="#686868"/>
<rect x="419.2" y="235.0" width="15.9" height="15.9" fill="#686868"/>
<rect x="434.6" y="235.0" width="15.9" height="15.9" fill="#686868"/>
<rect x="450.0" y="235.0" width="15.9" height="15.9" fill="#686868"/>
<rect x="465.4" y="235.0" width="15.9" height="15.9" fill="#696969"/>
<rect x="49.6" y="250.4" width="15.9" height="15.9" fill="#3c3c3c"/>
<rect x="65.0" y="250.4" width="15.9" height="15.9" fill="#3b3b3b"/>
<rect x="80.4" y="250.4" width="15.9" height="15.9" fill="#2a2a2a"/>
<rect x="95.8" y="250.4" width="15.9" height="15.9" fill="#2a2a2a"/>
<rect x="111.2" y="250.4" width="15.9" height="15.9" fill="#303030"/>
<rect x="126.6" y="250.4" width="15.9" height="15.9" fill="#323232"/>
<rect x="142.0" y="250.4" width="15.9" height="15.9" fill="#404040"/>
<rect x="157.4" y="250.4" width="15.9" height="15.9" fill="#303030"/>
<rect x="172.8" y="250.4" width="15.9" height="15.9" fill="#323232"/>
<rect x="188.2" y="250.4" width="15.9" height="15.9" fill="#4e4e4e"/>
<rect x="203.6" y="250.4" width="15.9" height="15.9" fill="#292929"/>
<rect x="219.0" y="250.4" width="15.9" height="15.9" fill="#292929"/>
<rect x="234.4" y="250.4" width="15.9" height="15.9" fill="#343434"/>
<rect x="249.8" y="250.4" width="15.9" height="15.9" fill="#686868"/>
<rect x="265.2" y="250.4" width="15.9" height="15.9" fill="#323232"/>
<rect x="280.6" y="250.4" width="15.9" height="15.9" fill="#353535"/>
<rect x="296.0" y="250.4" width="15.9" height="15.9" fill="#363636"/>
<rect x="311.4" y="250.4" width="15.9" height="15.9" fill="#363636"/>
<rect x="326.8" y="250.4" width="15.9" height="15.9" fill="#414141"/>
<rect x="342.2" y="250.4" width="15.9" height="15.9" fill="#4f4f4f"/>
<rect x="357.6" y="250.4" width="15.9" height="15.9" fill="#585858"/>
<rect x="373.0" y="250.4" width="15.9" height="15.9" fill="#616161"/>
<rect x="388.4" y="250.4" width="15.9" height="15.9" fill="#6f6f6f"/>
<rect x="403.8" y="250.4" width="15.9" height="15.9" fill="#6f6f6f"/>
<rect x="419.2" y="250.4" width="15.9" height="15.9" fill="#6f6f6f"/>
<rect x="434.6" y="250.4" width="15.9" height="15.9" fill="#6d6d6d"/>
<rect x="450.0" y="250.4" width="15.9" height="15.9" fill="#686868"/>
<rect x="465.4" y="250.4" width="15.9" height="15.9" fill="#686868"/>
<rect x="49.6" y="265.9" width="15.9" height="15.9" fill="#363636"/>
<rect x="65.0" y="265.9" width="15.9" height="15.9" fill="#333333"/>
<rect x="80.4" y="265.9" width="15.9" height="15.9" fill="#303030"/>
<rect x="95.8" y="265.9" width="15.9" height="15.9" fill="#303030"/>
<rect x="111.2" y="265.9" width="15.9" height="15.9" fill="#303030"/>
<rect x="126.6" y="265.9" width="15.9" height="15.9" fill="#323232"/>
<rect x="142.0" y="265.9" width="15.9" height="15.9" fill="#515151"/>
<rect x="157.4" y="265.9" width="15.9" height="15.9" fill="#515151"/>
<rect x="172.8" y="265.9" width="15.9" height="15.9" fill="#515151"/>
<rect x="188.2" y="265.9" width="15.9" height="15.9" fill="#4e4e4e"/>
<rect x="203.6" y="265.9" width="15.9" height="15.9" fill="#343434"/>
<rect x="219.0" y="265.9" width="15.9" height="15.9" fill="#292929"/>
<rect x="234.4" y="265.9" width="15.9" height="15.9" fill="#2b2b2b"/>
<rect x="249.8" y="265.9" width="15.9" height="15.9" fill="#5d5d5d"/>
<rect x="265.2" y="265.9" width="15.9" height="15.9" fill="#343434"/>
<rect x="280.6" y="265.9" width="15.9" height="15.9" fill="#363636"/>
<rect x="296.0" y="265.9" width="15.9" height="15.9" fill="#383838"/>
<rect x="311.4" y="265.9" width="15.9" height="15.9" fill="#383838"/>
<rect x="326.8" y="265.9" width="15.9" height="15.9" fill="#505050"/>
<rect x="342.2" y="265.9" width="15.9" height="15.9" fill="#5d5d5d"/>
<rect x="357.6" y="265.9" width="15.9" height="15.9" fill="#5d5d5d"/>
<rect x="373.0" y="265.9" width="15.9" height="15.9" fill="#686868"/>
<rect x="388.4" y="265.9" width="15.9" height="15.9" fill="#747474"/>
<rect x="403.8" y="265.9" width="15.9" height="15.9" fill="#747474"/>
<rect x="419.2" y="265.9" width="15.9" height="15.9" fill="#747474"/>
<rect x="434.6" y="265.9" width="15.9" height="15.9" fill="#717171"/>
<rect x="450.0" y="265.9" width="15.9" height="15.9" fill="#6e6e6e"/>
<rect x="465.4" y="265.9" width="15.9" height="15.9" fill="#686868"/>
<rect x="49.6" y="281.3" width="15.9" height="15.9" fill="#333333"/>
<rect x="65.0" y="281.3" width="15.9" height="15.9" fill="#363636"/>
<rect x="80.4" y="281.3" width="15.9" height="15.9" fill="#404040"/>
<rect x="95.8" y="281.3" width="15.9" height="15.9" fill="#4e4e4e"/>
<rect x="111.2" y="281.3" width="15.9" height="15.9" fill="#404040"/>
<rect x="126.6" y="281.3" width="15.9" height="15.9" fill="#323232"/>
<rect x="142.0" y="281.3" width="15.9" height="15.9" fill="#5d5d5d"/>
<rect x="157.4" y="281.3" width="15.9" height="15.9" fill="#5d5d5d"/>
<rect x="172.8" y="281.3" width="15.9" height="15.9" fill="#686868"/>
<rect x="188.2" y="281.3" width="15.9" height="15.9" fill="#5d5d5d"/>
<rect x="203.6" y="281.3" width="15.9" height="15.9" fill="#404040"/>
<rect x="219.0" y="281.3" width="15.9" height="15.9" fill="#353535"/>
<rect x="234.4" y="281.3" width="15.9" height="15.9" fill="#2c2c2c"/>
<rect x="249.8" y="281.3" width="15.9" height="15.9" fill="#343434"/>
<rect x="265.2" y="281.3" width="15.9" height="15.9" fill="#343434"/>
<rect x="280.6" y="281.3" width="15.9" height="15.9" fill="#353535"/>
<rect x="296.0" y="281.3" width="15.9" height="15.9" fill="#404040"/>
<rect x="311.4" y="281.3" width="15.9" height="15.9" fill="#383838"/>
<rect x="326.8" y="281.3" width="15.9" height="15.9" fill="#565656"/>
<rect x="342.2" y="281.3" width="15.9" height="15.9" fill="#646464"/>
<rect x="357.6" y="281.3" width="15.9" height="15.9" fill="#686868"/>
<rect x="373.0" y="281.3" width="15.9" height="15.9" fill="#747474"/>
<rect x="388.4" y="281.3" width="15.9" height="15.9" fill="#6f6f6f"/>
<rect x="403.8" y="281.3" width="15.9" height="15.9" fill="#6f6f6f"/>
<rect x="419.2" y="281.3" width="15.9" height="15.9" fill="#6f6f6f"/>
<rect x="434.6" y="281.3" width="15.9" height="15.9" fill="#727272"/>
<rect x="450.0" y="281.3" width="15.9" height="15.9" fill="#717171"/>
<rect x="49.6" y="296.7" width="15.9" height="15.9" fill="#2f2f2f"/>
<rect x="65.0" y="296.7" width="15.9" height="15.9" fill="#313131"/>
<rect x="80.4" y="296.7" width="15.9" height="15.9" fill="#323232"/>
<rect x="95.8" y="296.7" width="15.9" height="15.9" fill="#323232"/>
<rect x="111.2" y="296.7" width="15.9" height="15.9" fill="#303030"/>
<rect x="126.6" y="296.7" width="15.9" height="15.9" fill="#2a2a2a"/>
<rect x="142.0" y="296.7" width="15.9" height="15.9" fill="#383838"/>
<rect x="157.4" y="296.7" width="15.9" height="15.9" fill="#515151"/>
<rect x="172.8" y="296.7" width="15.9" height="15.9" fill="#5d5d5d"/>
<rect x="188.2" y="296.7" width="15.9" height="15.9" fill="#515151"/>
<rect x="203.6" y="296.7" width="15.9" height="15.9" fill="#4e4e4e"/>
<rect x="219.0" y="296.7" width="15.9" height="15.9" fill="#404040"/>
<rect x="234.4" y="296.7" width="15.9" height="15.9" fill="#343434"/>
<rect x="249.8" y="296.7" width="15.9" height="15.9" fill="#383838"/>
<rect x="265.2" y="296.7" width="15.9" height="15.9" fill="#363636"/>
<rect x="280.6" y="296.7" width="15.9" height="15.9" fill="#363636"/>
<rect x="296.0" y="296.7" width="15.9" height="15.9" fill="#404040"/>
<rect x="311.4" y="296.7" width="15.9" height="15.9" fill="#404040"/>
<rect x="326.8" y="296.7" width="15.9" height="15.9" fill="#585858"/>
<rect x="342.2" y="296.7" width="15.9" height="15.9" fill="#646464"/>
<rect x="357.6" y="296.7" width="15.9" height="15.9" fill="#8b8b8b"/>
<rect x="373.0" y="296.7" width="15.9" height="15.9" fill="#8b8b8b"/>
<rect x="388.4" y="296.7" width="15.9" height="15.9" fill="#868686"/>
<rect x="403.8" y="296.7" width="15.9" height="15.9" fill="#868686"/>
<rect x="419.2" y="296.7" width="15.9" height="15.9" fill="#7c7c7c"/>
<rect x="434.6" y="296.7" width="15.9" height="15.9" fill="#6f6f6f"/>
<rect x="450.0" y="296.7" width="15.9" height="15.9" fill="#707070"/>
<rect x="49.6" y="312.1" width="15.9" height="15.9" fill="#292929"/>
<rect x="65.0" y="312.1" width="15.9" height="15.9" fill="#272727"/>
<rect x="80.4" y="312.1" width="15.9" height="15.9" fill="#222222"/>
<rect x="95.8" y="312.1" width="15.9" height="15.9" fill="#222222"/>
<rect x="111.2" y="312.1" width="15.9" height="15.9" fill="#1d1d1d"/>
<rect x="126.6" y="312.1" width="15.9" height="15.9" fill="#1d1d1d"/>
<rect x="142.0" y="312.1" width="15.9" height="15.9" fill="#1e1e1e"/>
<rect x="157.4" y="312.1" width="15.9" height="15.9" fill="#323232"/>
<rect x="172.8" y="312.1" width="15.9" height="15.9" fill="#5d5d5d"/>
<rect x="188.2" y="312.1" width="15.9" height="15.9" fill="#515151"/>
<rect x="203.6" y="312.1" width="15.9" height="15.9" fill="#4e4e4e"/>
<rect x="219.0" y="312.1" width="15.9" height="15.9" fill="#4e4e4e"/>
<rect x="234.4" y="312.1" width="15.9" height="15.9" fill="#4c4c4c"/>
<rect x="249.8" y="312.1" width="15.9" height="15.9" fill="#404040"/>
<rect x="265.2" y="312.1" width="15.9" height="15.9" fill="#343434"/>
<rect x="280.6" y="312.1" width="15.9" height="15.9" fill="#353535"/>
<rect x="296.0" y="312.1" width="15.9" height="15.9" fill="#404040"/>
<rect x="311.4" y="312.1" width="15.9" height="15.9" fill="#505050"/>
<rect x="326.8" y="312.1" width="15.9" height="15.9" fill="#5d5d5d"/>
<rect x="342.2" y="312.1" width="15.9" height="15.9" fill="#646464"/>
<rect x="357.6" y="312.1" width="15.9" height="15.9" fill="#8b8b8b"/>
<rect x="373.0" y="312.1" width="15.9" height="15.9" fill="#8b8b8b"/>
<rect x="388.4" y="312.1" width="15.9" height="15.9" fill="#8b8b8b"/>
<rect x="403.8" y="312.1" width="15.9" height="15.9" fill="#8b8b8b"/>
<rect x="419.2" y="312.1" width="15.9" height="15.9" fill="#898989"/>
<rect x="434.6" y="312.1" width="15.9" height="15.9" fill="#808080"/>
<rect x="450.0" y="312.1" width="15.9" height="15.9" fill="#6f6f6f"/>
<rect x="49.6" y="327.5" width="15.9" height="15.9" fill="#242424"/>
<rect x="65.0" y="327.5" width="15.9" height="15.9" fill="#242424"/>
<rect x="80.4" y="327.5" width="15.9" height="15.9" fill="#222222"/>
<rect x="95.8" y="327.5" width="15.9" height="15.9" fill="#242424"/>
<rect x="111.2" y="327.5" width="15.9" height="15.9" fill="#1d1d1d"/>
<rect x="126.6" y="327.5" width="15.9" height="15.9" fill="#1d1d1d"/>
<rect x="142.0" y="327.5" width="15.9" height="15.9" fill="#1d1d1d"/>
<rect x="157.4" y="327.5" width="15.9" height="15.9" fill="#1d1d1d"/>
<rect x="172.8" y="327.5" width="15.9" height="15.9" fill="#323232"/>
<rect x="188.2" y="327.5" width="15.9" height="15.9" fill="#4e4e4e"/>
<rect x="203.6" y="327.5" width="15.9" height="15.9" fill="#4e4e4e"/>
<rect x="219.0" y="327.5" width="15.9" height="15.9" fill="#515151"/>
<rect x="234.4" y="327.5" width="15.9" height="15.9" fill="#565656"/>
<rect x="249.8" y="327.5" width="15.9" height="15.9" fill="#4e4e4e"/>
<rect x="265.2" y="327.5" width="15.9" height="15.9" fill="#363636"/>
<rect x="280.6" y="327.5" width="15.9" height="15.9" fill="#353535"/>
<rect x="296.0" y="327.5" width="15.9" height="15.9" fill="#4c4c4c"/>
<rect x="311.4" y="327.5" width="15.9" height="15.9" fill="#515151"/>
<rect x="326.8" y="327.5" width="15.9" height="15.9" fill="#5d5d5d"/>
<rect x="342.2" y="327.5" width="15.9" height="15.9" fill="#646464"/>
<rect x="357.6" y="327.5" width="15.9" height="15.9" fill="#8b8b8b"/>
<rect x="373.0" y="327.5" width="15.9" height="15.9" fill="#8b8b8b"/>
<rect x="388.4" y="327.5" width="15.9" height="15.9" fill="#7b7b7b"/>
<rect x="403.8" y="327.5" width="15.9" height="15.9" fill="#818181"/>
<rect x="419.2" y="327.5" width="15.9" height="15.9" fill="#8b8b8b"/>
<rect x="434.6" y="327.5" width="15.9" height="15.9" fill="#8a8a8a"/>
<rect x="49.6" y="342.9" width="15.9" height="15.9" fill="#222222"/>
<rect x="65.0" y="342.9" width="15.9" height="15.9" fill="#222222"/>
<rect x="80.4" y="342.9" width="15.9" height="15.9" fill="#272727"/>
<rect x="95.8" y="342.9" width="15.9" height="15.9" fill="#303030"/>
<rect x="111.2" y="342.9" width="15.9" height="15.9" fill="#272727"/>
<rect x="126.6" y="342.9" width="15.9" height="15.9" fill="#242424"/>
<rect x="142.0" y="342.9" width="15.9" height="15.9" fill="#1f1f1f"/>
<rect x="157.4" y="342.9" width="15.9" height="15.9" fill="#1d1d1d"/>
<rect x="172.8" y="342.9" width="15.9" height="15.9" fill="#1f1f1f"/>
<rect x="188.2" y="342.9" width="15.9" height="15.9" fill="#323232"/>
<rect x="203.6" y="342.9" width="15.9" height="15.9" fill="#4e4e4e"/>
<rect x="219.0" y="342.9" width="15.9" height="15.9" fill="#515151"/>
<rect x="234.4" y="342.9" width="15.9" height="15.9" fill="#5d5d5d"/>
<rect x="249.8" y="342.9" width="15.9" height="15.9" fill="#505050"/>
<rect x="265.2" y="342.9" width="15.9" height="15.9" fill="#4e4e4e"/>
<rect x="280.6" y="342.9" width="15.9" height="15.9" fill="#4e4e4e"/>
<rect x="296.0" y="342.9" width="15.9" height="15.9" fill="#505050"/>
<rect x="311.4" y="342.9" width="15.9" height="15.9" fill="#515151"/>
<rect x="326.8" y="342.9" width="15.9" height="15.9" fill="#585858"/>
<rect x="342.2" y="342.9" width="15.9" height="15.9" fill="#808080"/>
<rect x="357.6" y="342.9" width="15.9" height="15.9" fill="#808080"/>
<rect x="373.0" y="342.9" width="15.9" height="15.9" fill="#747474"/>
<rect x="388.4" y="342.9" width="15.9" height="15.9" fill="#747474"/>
<rect x="403.8" y="342.9" width="15.9" height="15.9" fill="#727272"/>
<rect x="419.2" y="342.9" width="15.9" height="15.9" fill="#7b7b7b"/>
<rect x="434.6" y="342.9" width="15.9" height="15.9" fill="#8b8b8b"/>
<rect x="49.6" y="358.3" width="15.9" height="15.9" fill="#202020"/>
<rect x="65.0" y="358.3" width="15.9" height="15.9" fill="#212121"/>
<rect x="80.4" y="358.3" width="15.9" height="15.9" fill="#1e1e1e"/>
<rect x="95.8" y="358.3" width="15.9" height="15.9" fill="#242424"/>
<rect x="111.2" y="358.3" width="15.9" height="15.9" fill="#202020"/>
<rect x="126.6" y="358.3" width="15.9" height="15.9" fill="#202020"/>
<rect x="142.0" y="358.3" width="15.9" height="15.9" fill="#2d2d2d"/>
<rect x="157.4" y="358.3" width="15.9" height="15.9" fill="#2a2a2a"/>
<rect x="172.8" y="358.3" width="15.9" height="15.9" fill="#242424"/>
<rect x="188.2" y="358.3" width="15.9" height="15.9" fill="#252525"/>
<rect x="203.6" y="358.3" width="15.9" height="15.9" fill="#404040"/>
<rect x="219.0" y="358.3" width="15.9" height="15.9" fill="#4e4e4e"/>
<rect x="234.4" y="358.3" width="15.9" height="15.9" fill="#515151"/>
<rect x="249.8" y="358.3" width="15.9" height="15.9" fill="#4e4e4e"/>
<rect x="265.2" y="358.3" width="15.9" height="15.9" fill="#565656"/>
<rect x="280.6" y="358.3" width="15.9" height="15.9" fill="#646464"/>
<rect x="296.0" y="358.3" width="15.9" height="15.9" fill="#565656"/>
<rect x="311.4" y="358.3" width="15.9" height="15.9" fill="#515151"/>
<rect x="326.8" y="358.3" width="15.9" height="15.9" fill="#565656"/>
<rect x="342.2" y="358.3" width="15.9" height="15.9" fill="#808080"/>
<rect x="357.6" y="358.3" width="15.9" height="15.9" fill="#808080"/>
<rect x="373.0" y="358.3" width="15.9" height="15.9" fill="#686868"/>
<rect x="388.4" y="358.3" width="15.9" height="15.9" fill="#686868"/>
<rect x="403.8" y="358.3" width="15.9" height="15.9" fill="#6e6e6e"/>
<rect x="419.2" y="358.3" width="15.9" height="15.9" fill="#6e6e6e"/>
<rect x="49.6" y="373.8" width="15.9" height="15.9" fill="#1f1f1f"/>
<rect x="65.0" y="373.8" width="15.9" height="15.9" fill="#1d1d1d"/>
<rect x="80.4" y="373.8" width="15.9" height="15.9" fill="#1d1d1d"/>
<rect x="95.8" y="373.8" width="15.9" height="15.9" fill="#1e1e1e"/>
<rect x="111.2" y="373.8" width="15.9" height="15.9" fill="#242424"/>
<rect x="126.6" y="373.8" width="15.9" height="15.9" fill="#272727"/>
<rect x="142.0" y="373.8" width="15.9" height="15.9" fill="#272727"/>
<rect x="157.4" y="373.8" width="15.9" height="15.9" fill="#313131"/>
<rect x="172.8" y="373.8" width="15.9" height="15.9" fill="#303030"/>
<rect x="188.2" y="373.8" width="15.9" height="15.9" fill="#383838"/>
<rect x="203.6" y="373.8" width="15.9" height="15.9" fill="#303030"/>
<rect x="219.0" y="373.8" width="15.9" height="15.9" fill="#363636"/>
<rect x="234.4" y="373.8" width="15.9" height="15.9" fill="#404040"/>
<rect x="249.8" y="373.8" width="15.9" height="15.9" fill="#404040"/>
<rect x="265.2" y="373.8" width="15.9" height="15.9" fill="#5d5d5d"/>
<rect x="280.6" y="373.8" width="15.9" height="15.9" fill="#686868"/>
<rect x="296.0" y="373.8" width="15.9" height="15.9" fill="#686868"/>
<rect x="311.4" y="373.8" width="15.9" height="15.9" fill="#515151"/>
<rect x="326.8" y="373.8" width="15.9" height="15.9" fill="#5d5d5d"/>
<rect x="342.2" y="373.8" width="15.9" height="15.9" fill="#616161"/>
<rect x="357.6" y="373.8" width="15.9" height="15.9" fill="#6f6f6f"/>
<rect x="373.0" y="373.8" width="15.9" height="15.9" fill="#6f6f6f"/>
<rect x="388.4" y="373.8" width="15.9" height="15.9" fill="#6a6a6a"/>
<rect x="403.8" y="373.8" width="15.9" height="15.9" fill="#686868"/>
<rect x="419.2" y="373.8" width="15.9" height="15.9" fill="#6b6b6b"/>
<rect x="49.6" y="389.2" width="15.9" height="15.9" fill="#1f1f1f"/>
<rect x="65.0" y="389.2" width="15.9" height="15.9" fill="#1f1f1f"/>
<rect x="80.4" y="389.2" width="15.9" height="15.9" fill="#1d1d1d"/>
<rect x="95.8" y="389.2" width="15.9" height="15.9" fill="#1d1d1d"/>
<rect x="111.2" y="389.2" width="15.9" height="15.9" fill="#242424"/>
<rect x="126.6" y="389.2" width="15.9" height="15.9" fill="#282828"/>
<rect x="142.0" y="389.2" width="15.9" height="15.9" fill="#242424"/>
<rect x="157.4" y="389.2" width="15.9" height="15.9" fill="#303030"/>
<rect x="172.8" y="389.2" width="15.9" height="15.9" fill="#2c2c2c"/>
<rect x="188.2" y="389.2" width="15.9" height="15.9" fill="#4c4c4c"/>
<rect x="203.6" y="389.2" width="15.9" height="15.9" fill="#2e2e2e"/>
<rect x="219.0" y="389.2" width="15.9" height="15.9" fill="#2b2b2b"/>
<rect x="234.4" y="389.2" width="15.9" height="15.9" fill="#363636"/>
<rect x="249.8" y="389.2" width="15.9" height="15.9" fill="#383838"/>
<rect x="265.2" y="389.2" width="15.9" height="15.9" fill="#5d5d5d"/>
<rect x="280.6" y="389.2" width="15.9" height="15.9" fill="#6d6d6d"/>
<rect x="296.0" y="389.2" width="15.9" height="15.9" fill="#5d5d5d"/>
<rect x="311.4" y="389.2" width="15.9" height="15.9" fill="#505050"/>
<rect x="326.8" y="389.2" width="15.9" height="15.9" fill="#686868"/>
<rect x="342.2" y="389.2" width="15.9" height="15.9" fill="#686868"/>
<rect x="357.6" y="389.2" width="15.9" height="15.9" fill="#686868"/>
<rect x="373.0" y="389.2" width="15.9" height="15.9" fill="#686868"/>
<rect x="388.4" y="389.2" width="15.9" height="15.9" fill="#6c6c6c"/>
<rect x="403.8" y="389.2" width="15.9" height="15.9" fill="#6a6a6a"/>
<rect x="419.2" y="389.2" width="15.9" height="15.9" fill="#686868"/>
<rect x="49.6" y="404.6" width="15.9" height="15.9" fill="#202020"/>
<rect x="65.0" y="404.6" width="15.9" height="15.9" fill="#202020"/>
<rect x="80.4" y="404.6" width="15.9" height="15.9" fill="#222222"/>
<rect x="95.8" y="404.6" width="15.9" height="15.9" fill="#1d1d1d"/>
<rect x="111.2" y="404.6" width="15.9" height="15.9" fill="#262626"/>
<rect x="126.6" y="404.6" width="15.9" height="15.9" fill="#2a2a2a"/>
<rect x="142.0" y="404.6" width="15.9" height="15.9" fill="#303030"/>
<rect x="157.4" y="404.6" width="15.9" height="15.9" fill="#313131"/>
<rect x="172.8" y="404.6" width="15.9" height="15.9" fill="#4e4e4e"/>
<rect x="188.2" y="404.6" width="15.9" height="15.9" fill="#515151"/>
<rect x="203.6" y="404.6" width="15.9" height="15.9" fill="#4e4e4e"/>
<rect x="219.0" y="404.6" width="15.9" height="15.9" fill="#353535"/>
<rect x="234.4" y="404.6" width="15.9" height="15.9" fill="#363636"/>
<rect x="249.8" y="404.6" width="15.9" height="15.9" fill="#4c4c4c"/>
<rect x="265.2" y="404.6" width="15.9" height="15.9" fill="#505050"/>
<rect x="280.6" y="404.6" width="15.9" height="15.9" fill="#565656"/>
<rect x="296.0" y="404.6" width="15.9" height="15.9" fill="#505050"/>
<rect x="311.4" y="404.6" width="15.9" height="15.9" fill="#505050"/>
<rect x="326.8" y="404.6" width="15.9" height="15.9" fill="#686868"/>
<rect x="342.2" y="404.6" width="15.9" height="15.9" fill="#686868"/>
<rect x="357.6" y="404.6" width="15.9" height="15.9" fill="#686868"/>
<rect x="373.0" y="404.6" width="15.9" height="15.9" fill="#686868"/>
<rect x="388.4" y="404.6" width="15.9" height="15.9" fill="#686868"/>
<rect x="403.8" y="404.6" width="15.9" height="15.9" fill="#6a6a6a"/>
<rect x="49.6" y="420.0" width="15.9" height="15.9" fill="#202020"/>
<rect x="65.0" y="420.0" width="15.9" height="15.9" fill="#212121"/>
<rect x="80.4" y="420.0" width="15.9" height="15.9" fill="#222222"/>
<rect x="95.8" y="420.0" width="15.9" height="15.9" fill="#1d1d1d"/>
<rect x="111.2" y="420.0" width="15.9" height="15.9" fill="#262626"/>
<rect x="126.6" y="420.0" width="15.9" height="15.9" fill="#2a2a2a"/>
<rect x="142.0" y="420.0" width="15.9" height="15.9" fill="#383838"/>
<rect x="157.4" y="420.0" width="15.9" height="15.9" fill="#4c4c4c"/>
<rect x="172.8" y="420.0" width="15.9" height="15.9" fill="#747474"/>
<rect x="188.2" y="420.0" width="15.9" height="15.9" fill="#747474"/>
<rect x="203.6" y="420.0" width="15.9" height="15.9" fill="#808080"/>
<rect x="219.0" y="420.0" width="15.9" height="15.9" fill="#515151"/>
<rect x="234.4" y="420.0" width="15.9" height="15.9" fill="#343434"/>
<rect x="249.8" y="420.0" width="15.9" height="15.9" fill="#404040"/>
<rect x="265.2" y="420.0" width="15.9" height="15.9" fill="#505050"/>
<rect x="280.6" y="420.0" width="15.9" height="15.9" fill="#505050"/>
<rect x="296.0" y="420.0" width="15.9" height="15.9" fill="#4e4e4e"/>
<rect x="311.4" y="420.0" width="15.9" height="15.9" fill="#505050"/>
<rect x="326.8" y="420.0" width="15.9" height="15.9" fill="#686868"/>
<rect x="342.2" y="420.0" width="15.9" height="15.9" fill="#686868"/>
<rect x="357.6" y="420.0" width="15.9" height="15.9" fill="#686868"/>
<rect x="373.0" y="420.0" width="15.9" height="15.9" fill="#686868"/>
<rect x="388.4" y="420.0" width="15.9" height="15.9" fill="#686868"/>
<rect x="403.8" y="420.0" width="15.9" height="15.9" fill="#686868"/>
<rect x="49.6" y="435.4" width="15.9" height="15.9" fill="#202020"/>
<rect x="65.0" y="435.4" width="15.9" height="15.9" fill="#202020"/>
<rect x="80.4" y="435.4" width="15.9" height="15.9" fill="#202020"/>
<rect x="95.8" y="435.4" width="15.9" height="15.9" fill="#222222"/>
<rect x="111.2" y="435.4" width="15.9" height="15.9" fill="#262626"/>
<rect x="126.6" y="435.4" width="15.9" height="15.9" fill="#262626"/>
<rect x="142.0" y="435.4" width="15.9" height="15.9" fill="#383838"/>
<rect x="157.4" y="435.4" width="15.9" height="15.9" fill="#313131"/>
<rect x="172.8" y="435.4" width="15.9" height="15.9" fill="#4e4e4e"/>
<rect x="188.2" y="435.4" width="15.9" height="15.9" fill="#808080"/>
<rect x="203.6" y="435.4" width="15.9" height="15.9" fill="#a2a2a2"/>
<rect x="219.0" y="435.4" width="15.9" height="15.9" fill="#808080"/>
<rect x="234.4" y="435.4" width="15.9" height="15.9" fill="#979797"/>
<rect x="249.8" y="435.4" width="15.9" height="15.9" fill="#747474"/>
<rect x="265.2" y="435.4" width="15.9" height="15.9" fill="#8b8b8b"/>
<rect x="280.6" y="435.4" width="15.9" height="15.9" fill="#747474"/>
<rect x="296.0" y="435.4" width="15.9" height="15.9" fill="#747474"/>
<rect x="311.4" y="435.4" width="15.9" height="15.9" fill="#7b7b7b"/>
<rect x="326.8" y="435.4" width="15.9" height="15.9" fill="#7b7b7b"/>
<rect x="342.2" y="435.4" width="15.9" height="15.9" fill="#717171"/>
<rect x="357.6" y="435.4" width="15.9" height="15.9" fill="#686868"/>
<rect x="373.0" y="435.4" width="15.9" height="15.9" fill="#686868"/>
<rect x="388.4" y="435.4" width="15.9" height="15.9" fill="#686868"/>
<rect x="49.6" y="450.8" width="15.9" height="15.9" fill="#1e1e1e"/>
<rect x="65.0" y="450.8" width="15.9" height="15.9" fill="#1e1e1e"/>
<rect x="80.4" y="450.8" width="15.9" height="15.9" fill="#1d1d1d"/>
<rect x="95.8" y="450.8" width="15.9" height="15.9" fill="#1d1d1d"/>
<rect x="111.2" y="450.8" width="15.9" height="15.9" fill="#242424"/>
<rect x="126.6" y="450.8" width="15.9" height="15.9" fill="#262626"/>
<rect x="142.0" y="450.8" width="15.9" height="15.9" fill="#383838"/>
<rect x="157.4" y="450.8" width="15.9" height="15.9" fill="#313131"/>
<rect x="172.8" y="450.8" width="15.9" height="15.9" fill="#4c4c4c"/>
<rect x="188.2" y="450.8" width="15.9" height="15.9" fill="#6d6d6d"/>
<rect x="203.6" y="450.8" width="15.9" height="15.9" fill="#7b7b7b"/>
<rect x="219.0" y="450.8" width="15.9" height="15.9" fill="#747474"/>
<rect x="234.4" y="450.8" width="15.9" height="15.9" fill="#979797"/>
<rect x="249.8" y="450.8" width="15.9" height="15.9" fill="#808080"/>
<rect x="265.2" y="450.8" width="15.9" height="15.9" fill="#8b8b8b"/>
<rect x="280.6" y="450.8" width="15.9" height="15.9" fill="#747474"/>
<rect x="296.0" y="450.8" width="15.9" height="15.9" fill="#6f6f6f"/>
<rect x="311.4" y="450.8" width="15.9" height="15.9" fill="#808080"/>
<rect x="326.8" y="450.8" width="15.9" height="15.9" fill="#808080"/>
<rect x="342.2" y="450.8" width="15.9" height="15.9" fill="#7a7a7a"/>
<rect x="357.6" y="450.8" width="15.9" height="15.9" fill="#717171"/>
<rect x="373.0" y="450.8" width="15.9" height="15.9" fill="#686868"/>
<rect x="388.4" y="450.8" width="15.9" height="15.9" fill="#686868"/>
<rect x="49.6" y="466.2" width="15.9" height="15.9" fill="#1e1e1e"/>
<rect x="65.0" y="466.2" width="15.9" height="15.9" fill="#1d1d1d"/>
<rect x="80.4" y="466.2" width="15.9" height="15.9" fill="#1d1d1d"/>
<rect x="95.8" y="466.2" width="15.9" height="15.9" fill="#1d1d1d"/>
<rect x="111.2" y="466.2" width="15.9" height="15.9" fill="#202020"/>
<rect x="126.6" y="466.2" width="15.9" height="15.9" fill="#262626"/>
<rect x="142.0" y="466.2" width="15.9" height="15.9" fill="#383838"/>
<rect x="157.4" y="466.2" width="15.9" height="15.9" fill="#383838"/>
<rect x="172.8" y="466.2" width="15.9" height="15.9" fill="#4c4c4c"/>
<rect x="188.2" y="466.2" width="15.9" height="15.9" fill="#4e4e4e"/>
<rect x="203.6" y="466.2" width="15.9" height="15.9" fill="#363636"/>
<rect x="219.0" y="466.2" width="15.9" height="15.9" fill="#5d5d5d"/>
<rect x="234.4" y="466.2" width="15.9" height="15.9" fill="#565656"/>
<rect x="249.8" y="466.2" width="15.9" height="15.9" fill="#5d5d5d"/>
<rect x="265.2" y="466.2" width="15.9" height="15.9" fill="#686868"/>
<rect x="280.6" y="466.2" width="15.9" height="15.9" fill="#979797"/>
<rect x="296.0" y="466.2" width="15.9" height="15.9" fill="#747474"/>
<rect x="311.4" y="466.2" width="15.9" height="15.9" fill="#747474"/>
<rect x="326.8" y="466.2" width="15.9" height="15.9" fill="#747474"/>
<rect x="342.2" y="466.2" width="15.9" height="15.9" fill="#7a7a7a"/>
<rect x="357.6" y="466.2" width="15.9" height="15.9" fill="#797979"/>
<rect x="49.6" y="481.6" width="15.9" height="15.9" fill="#212121"/>
<rect x="65.0" y="481.6" width="15.9" height="15.9" fill="#1f1f1f"/>
<rect x="80.4" y="481.6" width="15.9" height="15.9" fill="#1d1d1d"/>
<rect x="95.8" y="481.6" width="15.9" height="15.9" fill="#1d1d1d"/>
<rect x="111.2" y="481.6" width="15.9" height="15.9" fill="#1f1f1f"/>
<rect x="126.6" y="481.6" width="15.9" height="15.9" fill="#262626"/>
<rect x="142.0" y="481.6" width="15.9" height="15.9" fill="#383838"/>
<rect x="157.4" y="481.6" width="15.9" height="15.9" fill="#404040"/>
<rect x="172.8" y="481.6" width="15.9" height="15.9" fill="#515151"/>
<rect x="188.2" y="481.6" width="15.9" height="15.9" fill="#585858"/>
<rect x="203.6" y="481.6" width="15.9" height="15.9" fill="#363636"/>
<rect x="219.0" y="481.6" width="15.9" height="15.9" fill="#4e4e4e"/>
<rect x="234.4" y="481.6" width="15.9" height="15.9" fill="#505050"/>
<rect x="249.8" y="481.6" width="15.9" height="15.9" fill="#4e4e4e"/>
<rect x="265.2" y="481.6" width="15.9" height="15.9" fill="#515151"/>
<rect x="280.6" y="481.6" width="15.9" height="15.9" fill="#808080"/>
<rect x="296.0" y="481.6" width="15.9" height="15.9" fill="#808080"/>
<rect x="311.4" y="481.6" width="15.9" height="15.9" fill="#7b7b7b"/>
<rect x="326.8" y="481.6" width="15.9" height="15.9" fill="#7b7b7b"/>
<rect x="342.2" y="481.6" width="15.9" height="15.9" fill="#777777"/>
<rect x="357.6" y="481.6" width="15.9" height="15.9" fill="#797979"/>
<rect x="49.6" y="497.1" width="15.9" height="15.9" fill="#272727"/>
<rect x="65.0" y="497.1" width="15.9" height="15.9" fill="#262626"/>
<rect x="80.4" y="497.1" width="15.9" height="15.9" fill="#242424"/>
<rect x="95.8" y="497.1" width="15.9" height="15.9" fill="#313131"/>
<rect x="111.2" y="497.1" width="15.9" height="15.9" fill="#383838"/>
<rect x="126.6" y="497.1" width="15.9" height="15.9" fill="#383838"/>
<rect x="142.0" y="497.1" width="15.9" height="15.9" fill="#4e4e4e"/>
<rect x="157.4" y="497.1" width="15.9" height="15.9" fill="#303030"/>
<rect x="172.8" y="497.1" width="15.9" height="15.9" fill="#262626"/>
<rect x="188.2" y="497.1" width="15.9" height="15.9" fill="#303030"/>
<rect x="203.6" y="497.1" width="15.9" height="15.9" fill="#4e4e4e"/>
<rect x="219.0" y="497.1" width="15.9" height="15.9" fill="#4e4e4e"/>
<rect x="234.4" y="497.1" width="15.9" height="15.9" fill="#4c4c4c"/>
<rect x="249.8" y="497.1" width="15.9" height="15.9" fill="#4c4c4c"/>
<rect x="265.2" y="497.1" width="15.9" height="15.9" fill="#565656"/>
<rect x="280.6" y="497.1" width="15.9" height="15.9" fill="#747474"/>
<rect x="296.0" y="497.1" width="15.9" height="15.9" fill="#aeaeae"/>
<rect x="311.4" y="497.1" width="15.9" height="15.9" fill="#aeaeae"/>
<rect x="326.8" y="497.1" width="15.9" height="15.9" fill="#979797"/>
<rect x="342.2" y="497.1" width="15.9" height="15.9" fill="#7b7b7b"/>
<rect x="357.6" y="497.1" width="15.9" height="15.9" fill="#797979"/>
<rect x="49.6" y="512.5" width="15.9" height="15.9" fill="#2d2d2d"/>
<rect x="65.0" y="512.5" width="15.9" height="15.9" fill="#2e2e2e"/>
<rect x="80.4" y="512.5" width="15.9" height="15.9" fill="#323232"/>
<rect x="95.8" y="512.5" width="15.9" height="15.9" fill="#2e2e2e"/>
<rect x="111.2" y="512.5" width="15.9" height="15.9" fill="#2b2b2b"/>
<rect x="126.6" y="512.5" width="15.9" height="15.9" fill="#2d2d2d"/>
<rect x="142.0" y="512.5" width="15.9" height="15.9" fill="#383838"/>
<rect x="157.4" y="512.5" width="15.9" height="15.9" fill="#303030"/>
<rect x="172.8" y="512.5" width="15.9" height="15.9" fill="#2e2e2e"/>
<rect x="188.2" y="512.5" width="15.9" height="15.9" fill="#353535"/>
<rect x="203.6" y="512.5" width="15.9" height="15.9" fill="#4e4e4e"/>
<rect x="219.0" y="512.5" width="15.9" height="15.9" fill="#4c4c4c"/>
<rect x="234.4" y="512.5" width="15.9" height="15.9" fill="#404040"/>
<rect x="249.8" y="512.5" width="15.9" height="15.9" fill="#4c4c4c"/>
<rect x="265.2" y="512.5" width="15.9" height="15.9" fill="#5d5d5d"/>
<rect x="280.6" y="512.5" width="15.9" height="15.9" fill="#747474"/>
<rect x="296.0" y="512.5" width="15.9" height="15.9" fill="#bfbfbf"/>
<rect x="311.4" y="512.5" width="15.9" height="15.9" fill="#bfbfbf"/>
<rect x="326.8" y="512.5" width="15.9" height="15.9" fill="#b7b7b7"/>
<rect x="342.2" y="512.5" width="15.9" height="15.9" fill="#a0a0a0"/>
<rect x="357.6" y="512.5" width="15.9" height="15.9" fill="#7b7b7b"/>
<rect x="49.6" y="527.9" width="15.9" height="15.9" fill="#303030"/>
<rect x="65.0" y="527.9" width="15.9" height="15.9" fill="#333333"/>
<rect x="80.4" y="527.9" width="15.9" height="15.9" fill="#343434"/>
<rect x="95.8" y="527.9" width="15.9" height="15.9" fill="#2a2a2a"/>
<rect x="111.2" y="527.9" width="15.9" height="15.9" fill="#2a2a2a"/>
<rect x="126.6" y="527.9" width="15.9" height="15.9" fill="#2a2a2a"/>
<rect x="142.0" y="527.9" width="15.9" height="15.9" fill="#2b2b2b"/>
<rect x="157.4" y="527.9" width="15.9" height="15.9" fill="#373737"/>
<rect x="172.8" y="527.9" width="15.9" height="15.9" fill="#383838"/>
<rect x="188.2" y="527.9" width="15.9" height="15.9" fill="#383838"/>
<rect x="203.6" y="527.9" width="15.9" height="15.9" fill="#4e4e4e"/>
<rect x="219.0" y="527.9" width="15.9" height="15.9" fill="#4c4c4c"/>
<rect x="234.4" y="527.9" width="15.9" height="15.9" fill="#4e4e4e"/>
<rect x="249.8" y="527.9" width="15.9" height="15.9" fill="#515151"/>
<rect x="265.2" y="527.9" width="15.9" height="15.9" fill="#686868"/>
<rect x="280.6" y="527.9" width="15.9" height="15.9" fill="#6f6f6f"/>
<rect x="296.0" y="527.9" width="15.9" height="15.9" fill="#6f6f6f"/>
<rect x="311.4" y="527.9" width="15.9" height="15.9" fill="#939393"/>
<rect x="326.8" y="527.9" width="15.9" height="15.9" fill="#bfbfbf"/>
<rect x="342.2" y="527.9" width="15.9" height="15.9" fill="#bbbbbb"/>
<rect x="49.6" y="543.3" width="15.9" height="15.9" fill="#303030"/>
<rect x="65.0" y="543.3" width="15.9" height="15.9" fill="#303030"/>
<rect x="80.4" y="543.3" width="15.9" height="15.9" fill="#343434"/>
<rect x="95.8" y="543.3" width="15.9" height="15.9" fill="#2b2b2b"/>
<rect x="111.2" y="543.3" width="15.9" height="15.9" fill="#2a2a2a"/>
<rect x="126.6" y="543.3" width="15.9" height="15.9" fill="#2b2b2b"/>
<rect x="142.0" y="543.3" width="15.9" height="15.9" fill="#343434"/>
<rect x="157.4" y="543.3" width="15.9" height="15.9" fill="#404040"/>
<rect x="172.8" y="543.3" width="15.9" height="15.9" fill="#5d5d5d"/>
<rect x="188.2" y="543.3" width="15.9" height="15.9" fill="#515151"/>
<rect x="203.6" y="543.3" width="15.9" height="15.9" fill="#505050"/>
<rect x="219.0" y="543.3" width="15.9" height="15.9" fill="#4e4e4e"/>
<rect x="234.4" y="543.3" width="15.9" height="15.9" fill="#4c4c4c"/>
<rect x="249.8" y="543.3" width="15.9" height="15.9" fill="#515151"/>
<rect x="265.2" y="543.3" width="15.9" height="15.9" fill="#5d5d5d"/>
<rect x="280.6" y="543.3" width="15.9" height="15.9" fill="#808080"/>
<rect x="296.0" y="543.3" width="15.9" height="15.9" fill="#686868"/>
<rect x="311.4" y="543.3" width="15.9" height="15.9" fill="#6c6c6c"/>
<rect x="326.8" y="543.3" width="15.9" height="15.9" fill="#888888"/>
<rect x="342.2" y="543.3" width="15.9" height="15.9" fill="#bfbfbf"/>
<rect x="49.6" y="558.7" width="15.9" height="15.9" fill="#2d2d2d"/>
<rect x="65.0" y="558.7" width="15.9" height="15.9" fill="#2c2c2c"/>
<rect x="80.4" y="558.7" width="15.9" height="15.9" fill="#262626"/>
<rect x="95.8" y="558.7" width="15.9" height="15.9" fill="#323232"/>
<rect x="111.2" y="558.7" width="15.9" height="15.9" fill="#363636"/>
<rect x="126.6" y="558.7" width="15.9" height="15.9" fill="#323232"/>
<rect x="142.0" y="558.7" width="15.9" height="15.9" fill="#343434"/>
<rect x="157.4" y="558.7" width="15.9" height="15.9" fill="#404040"/>
<rect x="172.8" y="558.7" width="15.9" height="15.9" fill="#404040"/>
<rect x="188.2" y="558.7" width="15.9" height="15.9" fill="#505050"/>
<rect x="203.6" y="558.7" width="15.9" height="15.9" fill="#515151"/>
<rect x="219.0" y="558.7" width="15.9" height="15.9" fill="#585858"/>
<rect x="234.4" y="558.7" width="15.9" height="15.9" fill="#5d5d5d"/>
<rect x="249.8" y="558.7" width="15.9" height="15.9" fill="#5d5d5d"/>
<rect x="265.2" y="558.7" width="15.9" height="15.9" fill="#747474"/>
<rect x="280.6" y="558.7" width="15.9" height="15.9" fill="#747474"/>
<rect x="296.0" y="558.7" width="15.9" height="15.9" fill="#747474"/>
<rect x="311.4" y="558.7" width="15.9" height="15.9" fill="#686868"/>
<rect x="326.8" y="558.7" width="15.9" height="15.9" fill="#6a6a6a"/>
<rect x="49.6" y="574.1" width="15.9" height="15.9" fill="#2e2e2e"/>
<rect x="65.0" y="574.1" width="15.9" height="15.9" fill="#2c2c2c"/>
<rect x="80.4" y="574.1" width="15.9" height="15.9" fill="#292929"/>
<rect x="95.8" y="574.1" width="15.9" height="15.9" fill="#2d2d2d"/>
<rect x="111.2" y="574.1" width="15.9" height="15.9" fill="#363636"/>
<rect x="126.6" y="574.1" width="15.9" height="15.9" fill="#323232"/>
<rect x="142.0" y="574.1" width="15.9" height="15.9" fill="#343434"/>
<rect x="157.4" y="574.1" width="15.9" height="15.9" fill="#363636"/>
<rect x="172.8" y="574.1" width="15.9" height="15.9" fill="#363636"/>
<rect x="188.2" y="574.1" width="15.9" height="15.9" fill="#4c4c4c"/>
<rect x="203.6" y="574.1" width="15.9" height="15.9" fill="#515151"/>
<rect x="219.0" y="574.1" width="15.9" height="15.9" fill="#585858"/>
<rect x="234.4" y="574.1" width="15.9" height="15.9" fill="#6d6d6d"/>
<rect x="249.8" y="574.1" width="15.9" height="15.9" fill="#7b7b7b"/>
<rect x="265.2" y="574.1" width="15.9" height="15.9" fill="#7b7b7b"/>
<rect x="280.6" y="574.1" width="15.9" height="15.9" fill="#797979"/>
<rect x="296.0" y="574.1" width="15.9" height="15.9" fill="#747474"/>
<rect x="311.4" y="574.1" width="15.9" height="15.9" fill="#707070"/>
<rect x="326.8" y="574.1" width="15.9" height="15.9" fill="#686868"/>
<rect x="49.6" y="589.5" width="15.9" height="15.9" fill="#343434"/>
<rect x="65.0" y="589.5" width="15.9" height="15.9" fill="#323232"/>
<rect x="80.4" y="589.5" width="15.9" height="15.9" fill="#343434"/>
<rect x="95.8" y="589.5" width="15.9" height="15.9" fill="#353535"/>
<rect x="111.2" y="589.5" width="15.9" height="15.9" fill="#323232"/>
<rect x="126.6" y="589.5" width="15.9" height="15.9" fill="#2e2e2e"/>
<rect x="142.0" y="589.5" width="15.9" height="15.9" fill="#363636"/>
<rect x="157.4" y="589.5" width="15.9" height="15.9" fill="#363636"/>
<rect x="172.8" y="589.5" width="15.9" height="15.9" fill="#363636"/>
<rect x="188.2" y="589.5" width="15.9" height="15.9" fill="#4c4c4c"/>
<rect x="203.6" y="589.5" width="15.9" height="15.9" fill="#5d5d5d"/>
<rect x="219.0" y="589.5" width="15.9" height="15.9" fill="#616161"/>
<rect x="234.4" y="589.5" width="15.9" height="15.9" fill="#808080"/>
<rect x="249.8" y="589.5" width="15.9" height="15.9" fill="#808080"/>
<rect x="265.2" y="589.5" width="15.9" height="15.9" fill="#808080"/>
<rect x="280.6" y="589.5" width="15.9" height="15.9" fill="#7d7d7d"/>
<rect x="296.0" y="589.5" width="15.9" height="15.9" fill="#7a7a7a"/>
<rect x="311.4" y="589.5" width="15.9" height="15.9" fill="#747474"/>
<rect x="49.6" y="604.9" width="15.9" height="15.9" fill="#3d3d3d"/>
<rect x="65.0" y="604.9" width="15.9" height="15.9" fill="#3f3f3f"/>
<rect x="80.4" y="604.9" width="15.9" height="15.9" fill="#383838"/>
<rect x="95.8" y="604.9" width="15.9" height="15.9" fill="#292929"/>
<rect x="111.2" y="604.9" width="15.9" height="15.9" fill="#2d2d2d"/>
<rect x="126.6" y="604.9" width="15.9" height="15.9" fill="#323232"/>
<rect x="142.0" y="604.9" width="15.9" height="15.9" fill="#383838"/>
<rect x="157.4" y="604.9" width="15.9" height="15.9" fill="#404040"/>
<rect x="172.8" y="604.9" width="15.9" height="15.9" fill="#404040"/>
<rect x="188.2" y="604.9" width="15.9" height="15.9" fill="#4e4e4e"/>
<rect x="203.6" y="604.9" width="15.9" height="15.9" fill="#747474"/>
<rect x="219.0" y="604.9" width="15.9" height="15.9" fill="#8b8b8b"/>
<rect x="234.4" y="604.9" width="15.9" height="15.9" fill="#747474"/>
<rect x="249.8" y="604.9" width="15.9" height="15.9" fill="#747474"/>
<rect x="265.2" y="604.9" width="15.9" height="15.9" fill="#7c7c7c"/>
<rect x="280.6" y="604.9" width="15.9" height="15.9" fill="#808080"/>
<rect x="296.0" y="604.9" width="15.9" height="15.9" fill="#7e7e7e"/>
<rect x="49.6" y="620.4" width="15.9" height="15.9" fill="#484848"/>
<rect x="65.0" y="620.4" width="15.9" height="15.9" fill="#4a4a4a"/>
<rect x="80.4" y="620.4" width="15.9" height="15.9" fill="#5d5d5d"/>
<rect x="95.8" y="620.4" width="15.9" height="15.9" fill="#4c4c4c"/>
<rect x="111.2" y="620.4" width="15.9" height="15.9" fill="#505050"/>
<rect x="126.6" y="620.4" width="15.9" height="15.9" fill="#505050"/>
<rect x="142.0" y="620.4" width="15.9" height="15.9" fill="#4c4c4c"/>
<rect x="157.4" y="620.4" width="15.9" height="15.9" fill="#4c4c4c"/>
<rect x="172.8" y="620.4" width="15.9" height="15.9" fill="#4c4c4c"/>
<rect x="188.2" y="620.4" width="15.9" height="15.9" fill="#4d4d4d"/>
<rect x="203.6" y="620.4" width="15.9" height="15.9" fill="#5d5d5d"/>
<rect x="219.0" y="620.4" width="15.9" height="15.9" fill="#a2a2a2"/>
<rect x="234.4" y="620.4" width="15.9" height="15.9" fill="#7c7c7c"/>
<rect x="249.8" y="620.4" width="15.9" height="15.9" fill="#747474"/>
<rect x="265.2" y="620.4" width="15.9" height="15.9" fill="#747474"/>
<rect x="280.6" y="620.4" width="15.9" height="15.9" fill="#7a7a7a"/>
<rect x="296.0" y="620.4" width="15.9" height="15.9" fill="#808080"/>
<rect x="49.6" y="635.8" width="15.9" height="15.9" fill="#4e4e4e"/>
<rect x="65.0" y="635.8" width="15.9" height="15.9" fill="#4e4e4e"/>
<rect x="80.4" y="635.8" width="15.9" height="15.9" fill="#515151"/>
<rect x="95.8" y="635.8" width="15.9" height="15.9" fill="#515151"/>
<rect x="111.2" y="635.8" width="15.9" height="15.9" fill="#505050"/>
<rect x="126.6" y="635.8" width="15.9" height="15.9" fill="#4d4d4d"/>
<rect x="142.0" y="635.8" width="15.9" height="15.9" fill="#585858"/>
<rect x="157.4" y="635.8" width="15.9" height="15.9" fill="#585858"/>
<rect x="172.8" y="635.8" width="15.9" height="15.9" fill="#686868"/>
<rect x="188.2" y="635.8" width="15.9" height="15.9" fill="#505050"/>
<rect x="203.6" y="635.8" width="15.9" height="15.9" fill="#565656"/>
<rect x="219.0" y="635.8" width="15.9" height="15.9" fill="#565656"/>
<rect x="234.4" y="635.8" width="15.9" height="15.9" fill="#707070"/>
<rect x="249.8" y="635.8" width="15.9" height="15.9" fill="#6f6f6f"/>
<rect x="265.2" y="635.8" width="15.9" height="15.9" fill="#747474"/>
<rect x="280.6" y="635.8" width="15.9" height="15.9" fill="#747474"/>
<rect x="49.6" y="651.2" width="15.9" height="15.9" fill="#5a5a5a"/>
<rect x="65.0" y="651.2" width="15.9" height="15.9" fill="#535353"/>
<rect x="80.4" y="651.2" width="15.9" height="15.9" fill="#404040"/>
<rect x="95.8" y="651.2" width="15.9" height="15.9" fill="#808080"/>
<rect x="111.2" y="651.2" width="15.9" height="15.9" fill="#686868"/>
<rect x="126.6" y="651.2" width="15.9" height="15.9" fill="#404040"/>
<rect x="142.0" y="651.2" width="15.9" height="15.9" fill="#404040"/>
<rect x="157.4" y="651.2" width="15.9" height="15.9" fill="#4e4e4e"/>
<rect x="172.8" y="651.2" width="15.9" height="15.9" fill="#808080"/>
<rect x="188.2" y="651.2" width="15.9" height="15.9" fill="#747474"/>
<rect x="203.6" y="651.2" width="15.9" height="15.9" fill="#585858"/>
<rect x="219.0" y="651.2" width="15.9" height="15.9" fill="#585858"/>
<rect x="234.4" y="651.2" width="15.9" height="15.9" fill="#575757"/>
<rect x="249.8" y="651.2" width="15.9" height="15.9" fill="#606060"/>
<rect x="49.6" y="666.6" width="15.9" height="15.9" fill="#707070"/>
<rect x="65.0" y="666.6" width="15.9" height="15.9" fill="#6e6e6e"/>
<rect x="80.4" y="666.6" width="15.9" height="15.9" fill="#6f6f6f"/>
<rect x="95.8" y="666.6" width="15.9" height="15.9" fill="#5d5d5d"/>
<rect x="111.2" y="666.6" width="15.9" height="15.9" fill="#5d5d5d"/>
<rect x="126.6" y="666.6" width="15.9" height="15.9" fill="#4e4e4e"/>
<rect x="142.0" y="666.6" width="15.9" height="15.9" fill="#404040"/>
<rect x="157.4" y="666.6" width="15.9" height="15.9" fill="#505050"/>
<rect x="172.8" y="666.6" width="15.9" height="15.9" fill="#585858"/>
<rect x="188.2" y="666.6" width="15.9" height="15.9" fill="#5d5d5d"/>
<rect x="203.6" y="666.6" width="15.9" height="15.9" fill="#5d5d5d"/>
<rect x="219.0" y="666.6" width="15.9" height="15.9" fill="#5a5a5a"/>
<rect x="234.4" y="666.6" width="15.9" height="15.9" fill="#585858"/>
<rect x="249.8" y="666.6" width="15.9" height="15.9" fill="#585858"/>
<rect x="49.6" y="682.0" width="15.9" height="15.9" fill="#828282"/>
<rect x="65.0" y="682.0" width="15.9" height="15.9" fill="#8d8d8d"/>
<rect x="80.4" y="682.0" width="15.9" height="15.9" fill="#a2a2a2"/>
<rect x="95.8" y="682.0" width="15.9" height="15.9" fill="#929292"/>
<rect x="111.2" y="682.0" width="15.9" height="15.9" fill="#8d8d8d"/>
<rect x="126.6" y="682.0" width="15.9" height="15.9" fill="#868686"/>
<rect x="142.0" y="682.0" width="15.9" height="15.9" fill="#6f6f6f"/>
<rect x="157.4" y="682.0" width="15.9" height="15.9" fill="#8b8b8b"/>
<rect x="172.8" y="682.0" width="15.9" height="15.9" fill="#808080"/>
<rect x="188.2" y="682.0" width="15.9" height="15.9" fill="#5d5d5d"/>
<rect x="203.6" y="682.0" width="15.9" height="15.9" fill="#5d5d5d"/>
<rect x="219.0" y="682.0" width="15.9" height="15.9" fill="#616161"/>
<rect x="234.4" y="682.0" width="15.9" height="15.9" fill="#5d5d5d"/>
<rect x="249.8" y="682.0" width="15.9" height="15.9" fill="#585858"/>
<rect x="49.6" y="697.4" width="15.9" height="15.9" fill="#858585"/>
<rect x="65.0" y="697.4" width="15.9" height="15.9" fill="#8b8b8b"/>
<rect x="80.4" y="697.4" width="15.9" height="15.9" fill="#979797"/>
<rect x="95.8" y="697.4" width="15.9" height="15.9" fill="#9b9b9b"/>
<rect x="111.2" y="697.4" width="15.9" height="15.9" fill="#8d8d8d"/>
<rect x="126.6" y="697.4" width="15.9" height="15.9" fill="#848484"/>
<rect x="142.0" y="697.4" width="15.9" height="15.9" fill="#797979"/>
<rect x="157.4" y="697.4" width="15.9" height="15.9" fill="#848484"/>
<rect x="172.8" y="697.4" width="15.9" height="15.9" fill="#7b7b7b"/>
<rect x="188.2" y="697.4" width="15.9" height="15.9" fill="#686868"/>
<rect x="203.6" y="697.4" width="15.9" height="15.9" fill="#686868"/>
<rect x="219.0" y="697.4" width="15.9" height="15.9" fill="#636363"/>
<rect x="234.4" y="697.4" width="15.9" height="15.9" fill="#646464"/>
<rect x="49.6" y="712.8" width="15.9" height="15.9" fill="#797979"/>
<rect x="65.0" y="712.8" width="15.9" height="15.9" fill="#787878"/>
<rect x="80.4" y="712.8" width="15.9" height="15.9" fill="#686868"/>
<rect x="95.8" y="712.8" width="15.9" height="15.9" fill="#a2a2a2"/>
<rect x="111.2" y="712.8" width="15.9" height="15.9" fill="#929292"/>
<rect x="126.6" y="712.8" width="15.9" height="15.9" fill="#8b8b8b"/>
<rect x="142.0" y="712.8" width="15.9" height="15.9" fill="#979797"/>
<rect x="157.4" y="712.8" width="15.9" height="15.9" fill="#979797"/>
<rect x="172.8" y="712.8" width="15.9" height="15.9" fill="#979797"/>
<rect x="188.2" y="712.8" width="15.9" height="15.9" fill="#979797"/>
<rect x="203.6" y="712.8" width="15.9" height="15.9" fill="#808080"/>
<rect x="219.0" y="712.8" width="15.9" height="15.9" fill="#686868"/>
<rect x="234.4" y="712.8" width="15.9" height="15.9" fill="#656565"/>
<rect x="49.6" y="728.2" width="15.9" height="15.9" fill="#6d6d6d"/>
<rect x="65.0" y="728.2" width="15.9" height="15.9" fill="#686868"/>
<rect x="80.4" y="728.2" width="15.9" height="15.9" fill="#686868"/>
<rect x="95.8" y="728.2" width="15.9" height="15.9" fill="#a2a2a2"/>
<rect x="111.2" y="728.2" width="15.9" height="15.9" fill="#929292"/>
<rect x="126.6" y="728.2" width="15.9" height="15.9" fill="#8b8b8b"/>
<rect x="142.0" y="728.2" width="15.9" height="15.9" fill="#979797"/>
<rect x="157.4" y="728.2" width="15.9" height="15.9" fill="#979797"/>
<rect x="172.8" y="728.2" width="15.9" height="15.9" fill="#979797"/>
<rect x="188.2" y="728.2" width="15.9" height="15.9" fill="#979797"/>
<rect x="203.6" y="728.2" width="15.9" height="15.9" fill="#979797"/>
<rect x="219.0" y="728.2" width="15.9" height="15.9" fill="#858585"/>
<rect x="234.4" y="728.2" width="15.9" height="15.9" fill="#686868"/>
<rect x="49.6" y="743.6" width="15.9" height="15.9" fill="#686868"/>
<rect x="65.0" y="743.6" width="15.9" height="15.9" fill="#686868"/>
<rect x="80.4" y="743.6" width="15.9" height="15.9" fill="#858585"/>
<rect x="95.8" y="743.6" width="15.9" height="15.9" fill="#8a8a8a"/>
<rect x="111.2" y="743.6" width="15.9" height="15.9" fill="#959595"/>
<rect x="126.6" y="743.6" width="15.9" height="15.9" fill="#919191"/>
<rect x="142.0" y="743.6" width="15.9" height="15.9" fill="#939393"/>
<rect x="157.4" y="743.6" width="15.9" height="15.9" fill="#979797"/>
<rect x="172.8" y="743.6" width="15.9" height="15.9" fill="#979797"/>
<rect x="188.2" y="743.6" width="15.9" height="15.9" fill="#979797"/>
<rect x="203.6" y="743.6" width="15.9" height="15.9" fill="#979797"/>
<rect x="219.0" y="743.6" width="15.9" height="15.9" fill="#979797"/>
<rect x="49.6" y="759.1" width="15.9" height="15.9" fill="#686868"/>
<rect x="65.0" y="759.1" width="15.9" height="15.9" fill="#777777"/>
<rect x="80.4" y="759.1" width="15.9" height="15.9" fill="#7d7d7d"/>
<rect x="95.8" y="759.1" width="15.9" height="15.9" fill="#8c8c8c"/>
<rect x="111.2" y="759.1" width="15.9" height="15.9" fill="#909090"/>
<rect x="126.6" y="759.1" width="15.9" height="15.9" fill="#939393"/>
<rect x="142.0" y="759.1" width="15.9" height="15.9" fill="#949494"/>
<rect x="157.4" y="759.1" width="15.9" height="15.9" fill="#959595"/>
<rect x="172.8" y="759.1" width="15.9" height="15.9" fill="#979797"/>
<rect x="188.2" y="759.1" width="15.9" height="15.9" fill="#979797"/>
<rect x="203.6" y="759.1" width="15.9" height="15.9" fill="#979797"/>
<rect x="219.0" y="759.1" width="15.9" height="15.9" fill="#979797"/>
<polygon points="80,305.5 117,303 141.7,313 161.4,329 186,348.7 202,368.4 188.5,366 173.7,351 154,345 141.7,342.5 141.7,331.4 117,331.4 114.5,314 80,310.4" fill="#1d1d1d"/>
<polygon points="218,252.5 243,257.4 252.7,279.6 250,297 238,294.4 225.5,274.7 210.7,260" fill="#292929"/>
<polygon points="208,383 228,398 238,403 228,390.6 213,380.7" fill="#292929"/>
<polygon points="313,262 326.7,262 326.7,312 313,312" fill="#404040"/>
<polygon points="326.7,250 350,250 350,270 326.7,270" fill="#414141"/>
<polygon points="312,250 326.7,250 326.7,262 312,262" fill="#343434"/>
<polygon points="101,519 139,514 141.7,533.7 154,543.5 151.5,553.4 139,558.3 94.8,558.3 89.9,538.6" fill="#292929"/>
<polygon points="163.9,506.5 188.5,505.3 189.8,521.3 178.7,522.6 176.2,528.7 161.4,516.4" fill="#292929"/>
<polygon points="82.5,448.6 94.8,449.8 102.2,459.7 94.8,467 82.5,467" fill="#1e1e1e"/>
<polygon points="264,438 270,438 280,465 290,486 300,494 303,520 296,520 293,500 283,492 272,468" fill="#bfbfbf"/>
<polygon points="168.3,639.2 180.7,643.3 197.2,657.8 193,662 180.7,655.7 170.3,645.4" fill="#aeaeae"/>
<polygon points="213.7,614.4 224,612.3 228.2,628.9 220,631" fill="#bfbfbf"/>
</g>
<g filter="url(#pal2)" shape-rendering="crispEdges">
<polygon points="296,145.4 320,145.4 320,186.7 301.4,186.7 296,173.4" fill="#404040"/>
<polygon points="326.7,154.7 374.7,154.7 374.7,188 326.7,188" fill="#515151"/>
<polygon points="374.7,162.7 388,162.7 388,188 374.7,188" fill="#686868"/>
<polygon points="288,189.4 313.4,189.4 313.4,226.8 300,226.8 300,240 288,240" fill="#292929"/>
<polygon points="313.4,189.4 350,189.4 350,212 337.4,212 337.4,226.8 326.7,226.8 326.7,234.8 300,234.8 300,226.8 313.4,226.8" fill="#343434"/>
<polygon points="350,189.4 362.2,189.4 362.2,224 337.4,224 337.4,212 350,212" fill="#404040"/>
<polygon points="362.2,189.4 374.7,189.4 374.7,248 362.2,248" fill="#515151"/>
<polygon points="374.7,189.4 388,189.4 388,248 374.7,248" fill="#585858"/>
<polygon points="388,189.4 400,189.4 400,250.8 388,250.8" fill="#686868"/>
<polygon points="400,189.4 413.4,189.4 413.4,212 400,212" fill="#727272"/>
<polygon points="326.7,250.8 350.7,250.8 350.7,274.8 326.7,274.8" fill="#404040"/>
<polygon points="313.4,262.8 326.7,262.8 326.7,312 313.4,312" fill="#404040"/>
<polygon points="313.4,250.8 326.7,250.8 326.7,262.8 313.4,262.8" fill="#343434"/>
<polygon points="350.7,250.8 374.7,250.8 374.7,269.5 350.7,269.5" fill="#515151"/>
<polygon points="82.1,303.2 112.2,304.6 123.1,307.3 135.5,312.8 154.6,316.9 173.8,336 186.1,349.7 201.1,362 191.5,359.3 183.3,355.2 176.5,349.7 165.5,347 154.6,345.6 142.3,341.5 136.8,340.1 116.3,330.6 114.9,314.2 93,312.8 82.1,310" fill="#141414"/>
<polygon points="186,350 201,362 208,372 198,371 188,360" fill="#292929"/>
<polygon points="218,252.5 243,257.4 252.7,279.6 250,297 238,294.4 225.5,274.7 210.7,260" fill="#292929"/>
<polygon points="101,519 139,514 141.7,533.7 154,543.5 151.5,553.4 139,558.3 94.8,558.3 89.9,538.6" fill="#292929"/>
<polygon points="163.9,506.5 188.5,505.3 189.8,521.3 178.7,522.6 176.2,528.7 161.4,516.4" fill="#292929"/>
<polygon points="82.5,448.6 94.8,449.8 102.2,459.7 94.8,467 82.5,467" fill="#141414"/>
<polygon points="163,108 172,100 187,97 200,103 201,122 190,126 170,125 162,118" fill="#292929"/>
</g>
<rect x="111.5" y="314" width="4" height="16" fill="#8a2be2"/><rect x="82" y="326" width="3" height="8" fill="#8a2be2"/><rect x="98" y="322" width="6" height="2" fill="#8a2be2"/>
</g>
<g shape-rendering="crispEdges">
<rect x="450" y="139" width="12" height="25" fill="#8a2be2"/>
<rect x="437" y="152" width="13" height="12" fill="#8a2be2"/>
<rect x="437" y="164" width="13" height="11.5" fill="#000"/>
<rect x="437" y="175.5" width="13" height="12.5" fill="#8a2be2"/>
<rect x="79" y="65" width="52" height="1" fill="#00f0f0"/>
<rect x="157.5" y="65" width="32" height="1" fill="#00f0f0"/>
<rect x="219" y="65" width="32" height="1" fill="#00f0f0"/>
<rect x="281" y="65" width="32" height="1" fill="#00f0f0"/>
<rect x="341" y="65" width="43" height="1" fill="#00f0f0"/>
<rect x="403" y="65" width="40" height="1" fill="#00f0f0"/>
<rect x="455" y="65" width="44" height="1" fill="#00f0f0"/>
<rect x="527.2" y="65" width="33.6" height="1" fill="#00f0f0"/>
<rect x="589.1" y="65" width="29.9" height="1" fill="#00f0f0"/>
<rect x="651.8" y="65" width="29.2" height="1" fill="#00f0f0"/>
<rect x="713.7" y="65" width="29.3" height="1" fill="#00f0f0"/>
<rect x="776" y="65" width="29" height="1" fill="#00f0f0"/>
<rect x="837.8" y="65" width="25.2" height="1" fill="#00f0f0"/>
<rect x="901.4" y="65" width="42.6" height="1" fill="#00f0f0"/>
<rect x="79" y="127" width="794.8" height="1" fill="#00f0f0"/>
<rect x="896" y="127" width="48" height="1" fill="#00f0f0"/>
<rect x="79" y="188" width="789.5" height="1" fill="#00f0f0"/>
<rect x="889.8" y="188" width="54.2" height="1" fill="#00f0f0"/>
<rect x="79" y="250" width="792" height="1" fill="#00f0f0"/>
<rect x="898.8" y="250" width="45.2" height="1" fill="#00f0f0"/>
<rect x="79" y="312" width="788.9" height="1" fill="#00f0f0"/>
<rect x="898.8" y="312" width="45.2" height="1" fill="#00f0f0"/>
<rect x="79" y="374" width="788.9" height="1" fill="#00f0f0"/>
<rect x="902" y="374" width="42" height="1" fill="#00f0f0"/>
<rect x="79" y="435" width="789" height="1" fill="#00f0f0"/>
<rect x="902" y="435" width="42" height="1" fill="#00f0f0"/>
<rect x="79" y="497" width="789" height="1" fill="#00f0f0"/>
<rect x="902" y="497" width="42" height="1" fill="#00f0f0"/>
<rect x="79" y="559" width="788.9" height="1" fill="#00f0f0"/>
<rect x="902" y="559" width="42" height="1" fill="#00f0f0"/>
<rect x="79" y="621" width="785.7" height="1" fill="#00f0f0"/>
<rect x="905.2" y="621" width="38.8" height="1" fill="#00f0f0"/>
<rect x="79" y="682" width="785.7" height="1" fill="#00f0f0"/>
<rect x="905.2" y="682" width="38.8" height="1" fill="#00f0f0"/>
<rect x="79" y="65" width="1" height="618" fill="#00f0f0"/>
<rect x="141" y="71" width="1" height="612" fill="#00f0f0"/>
<rect x="202" y="71" width="1" height="612" fill="#00f0f0"/>
<rect x="264" y="71" width="1" height="612" fill="#00f0f0"/>
<rect x="326" y="71" width="1" height="612" fill="#00f0f0"/>
<rect x="388" y="71" width="1" height="612" fill="#00f0f0"/>
<rect x="449" y="70" width="1" height="613" fill="#00f0f0"/>
<rect x="511" y="71" width="1" height="612" fill="#00f0f0"/>
<rect x="573" y="71" width="1" height="612" fill="#00f0f0"/>
<rect x="634" y="71" width="1" height="612" fill="#00f0f0"/>
<rect x="696" y="71" width="1" height="612" fill="#00f0f0"/>
<rect x="758" y="71" width="1" height="612" fill="#00f0f0"/>
<rect x="820" y="71" width="1" height="612" fill="#00f0f0"/>
<rect x="881" y="71" width="1" height="48" fill="#00f0f0"/>
<rect x="881" y="132" width="1" height="48" fill="#00f0f0"/>
<rect x="881" y="193" width="1" height="49" fill="#00f0f0"/>
<rect x="881" y="255" width="1" height="49" fill="#00f0f0"/>
<rect x="881" y="317" width="1" height="49" fill="#00f0f0"/>
<rect x="881" y="379" width="1" height="48" fill="#00f0f0"/>
<rect x="881" y="440" width="1" height="49" fill="#00f0f0"/>
<rect x="881" y="502" width="1" height="49" fill="#00f0f0"/>
<rect x="881" y="564" width="1" height="49" fill="#00f0f0"/>
<rect x="881" y="626" width="1" height="48" fill="#00f0f0"/>
<rect x="943" y="65" width="1" height="618" fill="#00f0f0"/>
</g>
<g fill="none" stroke="#fff" stroke-width="1" stroke-linejoin="round" shape-rendering="crispEdges"><polyline points="264.7,45.3 258.8,44.5 258.8,46 261,49.7 264.7,53.3 269,54.8 269.8,59.2 281.5,66.5 284.5,73.1 286.7,79 285.9,84.9 290.3,89.3 292.5,95.1 298.4,98 311.6,106.9 326.3,117.1 338,125.9 355.6,135.5 373.5,129.6 388.3,125.4 400,125 417.6,126.8 429.3,125.6 441,122 449.9,118.6 461.6,116.3 464.5,112.9 476,110.2 490,109 505,109.6 510,114 512.4,119 516,122 517,127 520,132 524,136 533,135 538,133.6 550,132 552.4,128.6 554,131 559,132 560,136 565,139.6 569,138.4 569.6,145 572.4,149 571.6,160 569,169 565.6,175 568.4,177 567,180 565,182 567,186 572,186.6 565.6,187.4 564.4,195 559,200 562,208 567,217 574,224 580,228 588,238 595,244 597,250 599.2,253.3 600,259.2 604,264 609.3,261.9 604.5,264.5 606.7,272 610.7,282.7 615.5,293.3 610.7,300.8 614,308 619.5,318.7 620.5,332 617.3,342.7 610.7,346 605.3,354.7 602.7,365.3 598.7,378.7 594.7,385.3 595.2,397.3 594.7,408 598.7,418.7 605.3,426.7 613.3,438.7 616.7,447.3 623.3,456.7 629.5,466 627.9,474 628.7,487.3 632.7,495.3 634,510 638,524.7 644.7,535.3 654,542 659.9,552.7 663.3,563.3 670,575.3 675.3,582 675.9,590 670.5,594 672.7,600.7 677.5,606 675.9,609.2 682,610.8 683.3,613.5 688.7,614.5 692.7,618 696.7,618.5 702,614.5 710,613.5 718,613.5 723.3,609.2 728.7,608 739.3,608.7 750,609.2 756.7,610.8 758.5,608 765.3,609.3 767.5,605.3 778.7,605.3 786.7,601.9 798.7,593.3 808,585.3 817.3,577.9 824,570.7 829.9,561.3 836,552 842.7,545.3 849.3,541.3 853.3,529.3 855.5,518.7 856,512 852.5,510.7 854.7,504 860,500 867.2,498.1 878,495 886.3,490 888,488 888.7,484 887.3,482.7 888.7,474 888.7,462 886.3,461.3 885.3,456 882.7,450 882,445.3 879.3,443.3 877.3,439.3 878,434 886.7,427.3 892.7,423.3 897.3,422 902.7,415.3 906.7,410 909.5,407.5 915.9,403.3 928.7,399 939.3,394.7 946.8,390.5 950,387.3"/>
<polyline points="948.9,219.9 946.8,222 945.3,230.5 942.5,235.9 939.3,242.3 935.1,248.7 931.9,255 928.7,261.4 930.8,268.9 937.2,275.3 935.1,282.7 939.3,287 936.1,292.3 938.3,300.9 941.5,309.4 947.9,316.9 950,318"/>
<polygon points="554,147 557,143 560,142.6 558,149 556,149.4"/>
<polygon points="530,186.4 532,184 533,185.6 531,187.4"/>
<polygon points="893.5,131.3 896.7,131.3 897.7,139.9 898.8,149.5 903,154.8 902,159.5 899.9,158 898.8,152.7 894.5,150.5 892.8,142"/>
<polygon points="825.8,171.9 835.9,161.2 839.5,157.4 838,163.3 835.9,168.7 828.4,176.1 826.3,175.7"/>
<polygon points="845.9,190 851.9,185.7 859.3,183.6 866.8,185.1 870,190 872.1,194.3 880.7,192.1 871.1,199.6 870,207.1 864.7,211.3 865.7,216.7 862.5,218.8 855.1,222 855.1,227.3 852.9,220.9 849.7,216.7 843.3,223.1 840.8,219.9 841.2,210.3 842.9,201.7 843.3,194.3"/>
<polygon points="809.6,230.1 812.4,230.1 813.5,238 816.7,248.7 817.7,259.3 822,268.9 828,276.3 831.6,287 835.2,294.5 832.7,297 825.2,293.4 822,284.9 818.8,276.3 813.5,269.9 810.3,262.5 811.3,255 810.3,250.8 808.8,238"/>
<polygon points="870,306 868.5,311.5 872,317 873.6,329.7 869.4,339.3 872.1,346.7 875.3,357.4 878.5,364.9 880.7,365.9 881.7,358.5 884.9,365.9 880,350 879.6,344.6 878.5,339.3 881.3,329.7 877.9,325.4 876.4,316.9 874,309"/>
<polygon points="939.3,251.9 941.5,249.7 941.9,255.1 940,256.1"/>
<polygon points="933.4,261.5 936.1,262.5 938.3,266.8 936.1,267.9 934,264.7"/>
<polygon points="855,213 861,211 866,213.5 859,216"/></g>
<g shape-rendering="crispEdges">
<rect x="873.8" y="119" width="22.2" height="13" fill="#000"/>
<rect x="868.5" y="180" width="21.3" height="13" fill="#000"/>
<rect x="871" y="242" width="27.8" height="13" fill="#000"/>
<rect x="867.9" y="304" width="30.9" height="13" fill="#000"/>
<rect x="867.9" y="366" width="34.1" height="13" fill="#000"/>
<rect x="868" y="427" width="34" height="13" fill="#000"/>
<rect x="868" y="489" width="34" height="13" fill="#000"/>
<rect x="867.9" y="551" width="34.1" height="13" fill="#000"/>
<rect x="864.7" y="613" width="40.5" height="13" fill="#000"/>
<rect x="864.7" y="674" width="40.5" height="13" fill="#000"/>
</g>
<g fill="#ff0000" font-size="11.5px"><text x="134" y="70" textLength="23.5" lengthAdjust="spacingAndGlyphs">25W</text>
<text x="196" y="70" textLength="23" lengthAdjust="spacingAndGlyphs">20W</text>
<text x="258" y="70" textLength="23" lengthAdjust="spacingAndGlyphs">15W</text>
<text x="319.5" y="70" textLength="21.5" lengthAdjust="spacingAndGlyphs">10W</text>
<text x="385" y="70" textLength="17" lengthAdjust="spacingAndGlyphs">5W</text>
<text x="444.5" y="70" textLength="6" lengthAdjust="spacingAndGlyphs">0</text>
<text x="511.6" y="70" textLength="15.6" lengthAdjust="spacingAndGlyphs">5E</text>
<text x="566.7" y="70" textLength="22.4" lengthAdjust="spacingAndGlyphs">10E</text>
<text x="629.8" y="70" textLength="22" lengthAdjust="spacingAndGlyphs">15E</text>
<text x="691" y="70" textLength="22.7" lengthAdjust="spacingAndGlyphs">20E</text>
<text x="753" y="70" textLength="23" lengthAdjust="spacingAndGlyphs">25E</text>
<text x="814.8" y="70" textLength="23" lengthAdjust="spacingAndGlyphs">30E</text>
<text x="877.8" y="70" textLength="23.6" lengthAdjust="spacingAndGlyphs">35E</text>
<text x="879.6" y="130" textLength="16" lengthAdjust="spacingAndGlyphs">5N</text>
<text x="876" y="191" textLength="6.2" lengthAdjust="spacingAndGlyphs">0</text>
<text x="881.7" y="253" textLength="15.6" lengthAdjust="spacingAndGlyphs">5S</text>
<text x="874.3" y="315" textLength="23.4" lengthAdjust="spacingAndGlyphs">10S</text>
<text x="876.4" y="377" textLength="23.5" lengthAdjust="spacingAndGlyphs">15S</text>
<text x="876" y="438" textLength="23.3" lengthAdjust="spacingAndGlyphs">20S</text>
<text x="876" y="500" textLength="23.3" lengthAdjust="spacingAndGlyphs">25S</text>
<text x="875.3" y="562" textLength="24.6" lengthAdjust="spacingAndGlyphs">30S</text>
<text x="877.5" y="624" textLength="23.9" lengthAdjust="spacingAndGlyphs">35S</text>
<text x="877.5" y="685" textLength="23.9" lengthAdjust="spacingAndGlyphs">40S</text></g>
<g shape-rendering="crispEdges">
<rect x="46" y="47" width="19" height="354" fill="#fff"/>
<rect x="47" y="48" width="17" height="32" fill="#600000"/>
<rect x="47" y="80" width="17" height="32" fill="#f00000"/>
<rect x="47" y="112" width="17" height="32" fill="#ff4500"/>
<rect x="47" y="144" width="17" height="32" fill="#ffa500"/>
<rect x="47" y="176" width="17" height="32" fill="#ffff00"/>
<rect x="47" y="208" width="17" height="32" fill="#80ff00"/>
<rect x="47" y="240" width="17" height="32" fill="#008c00"/>
<rect x="47" y="272" width="17" height="32" fill="#00ffff"/>
<rect x="47" y="304" width="17" height="32" fill="#0080ff"/>
<rect x="47" y="336" width="17" height="32" fill="#0000ff"/>
<rect x="47" y="368" width="17" height="32" fill="#8a2be2"/>
<g fill="#ffaa80" font-size="11.5px"><text x="40" y="52" text-anchor="end">100</text><text x="40" y="84" text-anchor="end">80</text><text x="40" y="116" text-anchor="end">70</text><text x="40" y="148" text-anchor="end">60</text><text x="40" y="180" text-anchor="end">50</text><text x="40" y="212" text-anchor="end">40</text><text x="40" y="244" text-anchor="end">30</text><text x="40" y="276" text-anchor="end">25</text><text x="40" y="308" text-anchor="end">20</text><text x="40" y="340" text-anchor="end">15</text><text x="40" y="372" text-anchor="end">10</text><text x="40" y="404" text-anchor="end">0</text></g>
</g>
<text x="384" y="15.3" font-size="14.6px" fill="#fff" textLength="176" lengthAdjust="spacingAndGlyphs">BROADBAND ALBEDO</text>
<text x="392" y="30.3" font-size="13.2px" fill="#fff" textLength="147.5" lengthAdjust="spacingAndGlyphs">Jul 16, 2017 18:00 UTC</text>
<text x="9.6" y="27.4" font-size="11.7px" fill="#ffc400" textLength="107.7" lengthAdjust="spacingAndGlyphs">NASA Langley (M04.0)</text>
<text x="11.4" y="41.8" font-size="10.8px" fill="#ffaa80" textLength="54" lengthAdjust="spacingAndGlyphs">BBALB (%)</text>
<text x="224.8" y="747" font-size="11.5px" fill="#d8d8d8" font-family="Liberation Mono, monospace" textLength="504" lengthAdjust="spacingAndGlyphs" xml:space="preserve">MT10  BROADBAND ALBEDO   JUL 16, 2017 18:00Z   NASA LARC</text>
<rect x="269" y="284" width="7" height="7" fill="#ff00ff"/>
<rect x="376" y="382" width="7" height="7" fill="#ff00ff"/>
<text x="266.8" y="283.3" font-size="16.5px" font-weight="bold" fill="#fff" textLength="17" lengthAdjust="spacingAndGlyphs">X1</text>
<text x="376" y="402.4" font-size="16.5px" font-weight="bold" fill="#fff" textLength="20.5" lengthAdjust="spacingAndGlyphs">X2</text>
</svg>
</body></html>
